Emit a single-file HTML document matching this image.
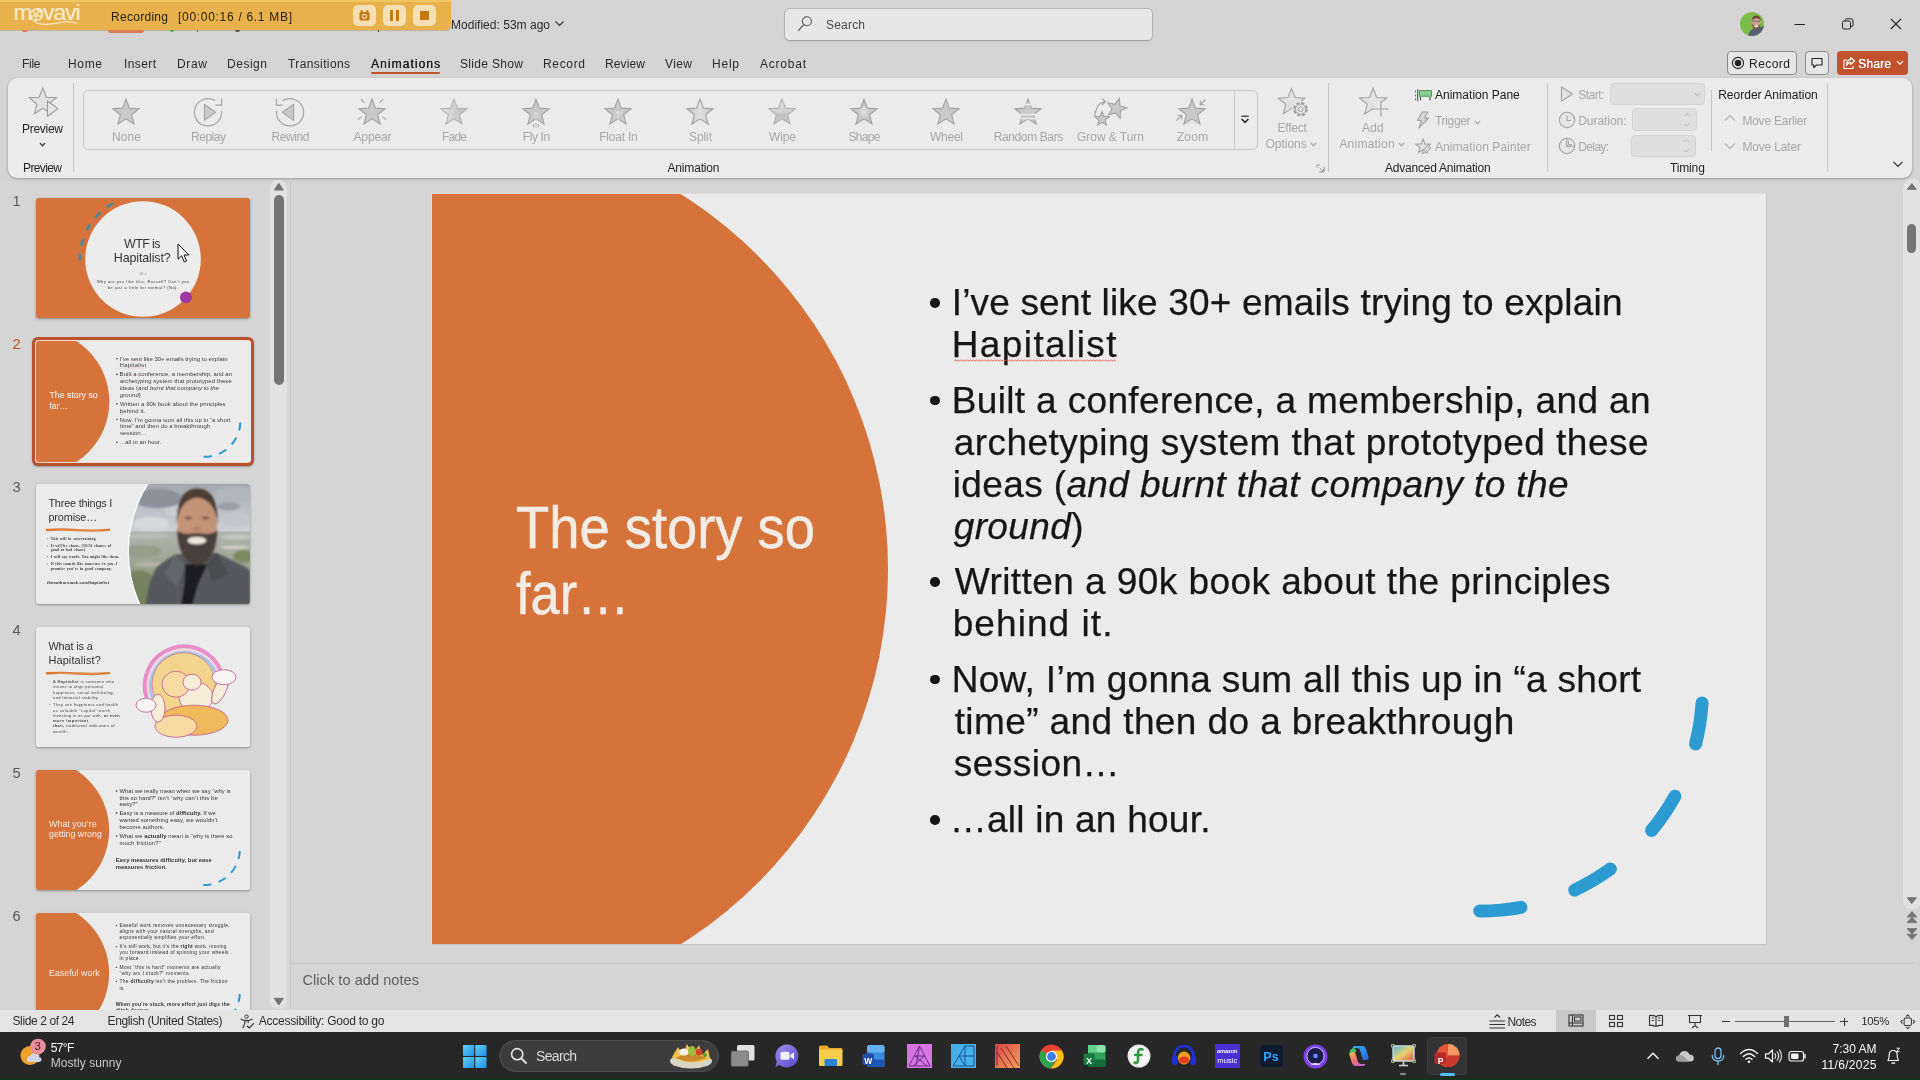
<!DOCTYPE html>
<html lang="en"><head><meta charset="utf-8"><title>PowerPoint</title>
<style>
html,body{margin:0;padding:0;}
body{width:1920px;height:1080px;overflow:hidden;background:#d4d4d4;position:relative;font-family:"Liberation Sans",sans-serif;}
#root{position:absolute;left:0;top:0;width:1920px;height:1080px;will-change:transform;}
.b{position:absolute;box-sizing:border-box;}
.t{position:absolute;white-space:nowrap;line-height:1;transform-origin:0 50%;}
svg{overflow:visible;}
</style></head>
<body>
<div id="root">
<!-- sec_chrome -->
<div class="b" style="left:0.00px;top:178.00px;width:1920.00px;height:832.00px;background:#d5d5d5;"></div>
<span class="t " style="left:451.00px;top:18.84px;font-size:12.00px;color:#2b2b2b;letter-spacing:0.017px;">Modified: 53m ago</span>
<svg class="b" style="left:554.00px;top:20.00px;" width="11" height="8" viewBox="0 0 11 8"><path d="M1.5 1.5 L5.5 5.5 L9.5 1.5" fill="none" stroke="#333" stroke-width="1.2"/></svg>
<div class="b" style="left:785.00px;top:9.00px;width:366.50px;height:31.00px;background:#e7e7e7;border-radius:4.5px;box-shadow:0 0 0 1px rgba(0,0,0,.13),0 1px 2px rgba(0,0,0,.16);"></div>
<svg class="b" style="left:797.00px;top:16.00px;" width="16" height="16" viewBox="0 0 16 16"><circle cx="9.9" cy="5.3" r="4.5" fill="none" stroke="#555" stroke-width="1.1"/><path d="M6.7 8.6 L1.2 14.8" stroke="#555" stroke-width="1.2" fill="none"/></svg>
<span class="t " style="left:826.00px;top:18.64px;font-size:12.00px;color:#4a4a4a;letter-spacing:0.195px;">Search</span>
<svg class="b" style="left:1740.00px;top:12.00px;" width="24" height="24" viewBox="0 0 24 24"><defs><clipPath id="avc"><circle cx="12" cy="12" r="12"/></clipPath></defs><g clip-path="url(#avc)"><rect width="24" height="24" fill="#7dbd46"/><path d="M8 24 Q10 16.5 15 16 L24 14 V24Z" fill="#566176"/><ellipse cx="16.2" cy="10.3" rx="4.6" ry="5.6" fill="#d2a285"/><path d="M11.6 9 Q12 3.5 16.5 3.6 Q21 3.8 20.8 9.5 Q19.5 6 16.2 6.2 Q13 6.2 11.6 9Z" fill="#6a4a3a"/><path d="M11.8 11.5 Q12.5 17.5 16.2 17.8 Q20 17.5 20.7 11.5 Q19.5 14 16.2 13.8 Q13 14 11.8 11.5Z" fill="#7a5a48"/><ellipse cx="16.2" cy="14.2" rx="2.2" ry="1" fill="#f3ece6"/><path d="M12.3 9.3 H20" stroke="#5b6b90" stroke-width="1.1"/></g></svg>
<svg class="b" style="left:1794.00px;top:18.00px;" width="12" height="12" viewBox="0 0 12 12"><path d="M0.5 6.5 H11" stroke="#222" stroke-width="1"/></svg>
<svg class="b" style="left:1842.00px;top:18.00px;" width="12" height="12" viewBox="0 0 12 12"><rect x="0.5" y="3" width="8" height="8" rx="1.5" fill="none" stroke="#222" stroke-width="1"/><path d="M3 3 V2.5 Q3 0.8 4.8 0.8 H9 Q11 0.8 11 2.8 V7 Q11 8.8 9 8.8" fill="none" stroke="#222" stroke-width="1"/></svg>
<svg class="b" style="left:1890.00px;top:18.00px;" width="12" height="12" viewBox="0 0 12 12"><path d="M0.8 0.8 L11 11 M11 0.8 L0.8 11" stroke="#222" stroke-width="1.1"/></svg>
<span class="t " style="left:22.00px;top:57.84px;font-size:12.00px;color:#2b2b2b;letter-spacing:-0.279px;">File</span>
<span class="t " style="left:68.00px;top:57.84px;font-size:12.00px;color:#2b2b2b;letter-spacing:0.663px;">Home</span>
<span class="t " style="left:124.00px;top:57.84px;font-size:12.00px;color:#2b2b2b;letter-spacing:0.398px;">Insert</span>
<span class="t " style="left:177.00px;top:57.84px;font-size:12.00px;color:#2b2b2b;letter-spacing:0.666px;">Draw</span>
<span class="t " style="left:227.00px;top:57.84px;font-size:12.00px;color:#2b2b2b;letter-spacing:0.529px;">Design</span>
<span class="t " style="left:288.00px;top:57.84px;font-size:12.00px;color:#2b2b2b;letter-spacing:0.376px;">Transitions</span>
<span class="t " style="left:371.00px;top:57.84px;font-size:12.00px;color:#1f1f1f;letter-spacing:1.071px;text-shadow:0.3px 0 0 #1f1f1f;">Animations</span>
<span class="t " style="left:460.00px;top:57.84px;font-size:12.00px;color:#2b2b2b;letter-spacing:0.329px;">Slide Show</span>
<span class="t " style="left:543.00px;top:57.84px;font-size:12.00px;color:#2b2b2b;letter-spacing:0.663px;">Record</span>
<span class="t " style="left:605.00px;top:57.84px;font-size:12.00px;color:#2b2b2b;letter-spacing:0.131px;">Review</span>
<span class="t " style="left:665.00px;top:57.84px;font-size:12.00px;color:#2b2b2b;letter-spacing:0.402px;">View</span>
<span class="t " style="left:712.00px;top:57.84px;font-size:12.00px;color:#2b2b2b;letter-spacing:0.773px;">Help</span>
<span class="t " style="left:760.00px;top:57.84px;font-size:12.00px;color:#2b2b2b;letter-spacing:0.774px;">Acrobat</span>
<div class="b" style="left:371.00px;top:72.00px;width:69.00px;height:2.00px;background:#c2522d;border-radius:1px;"></div>
<div class="b" style="left:1727.00px;top:51.00px;width:70.00px;height:24.00px;background:#e6e6e6;border:1px solid #8a8a8a;border-radius:4px;"></div>
<svg class="b" style="left:1731.00px;top:56.00px;" width="14" height="14" viewBox="0 0 14 14"><circle cx="7" cy="7" r="5.6" fill="none" stroke="#222" stroke-width="1.1"/><circle cx="7" cy="7" r="3.2" fill="#222"/></svg>
<span class="t " style="left:1749.00px;top:57.84px;font-size:12.00px;color:#1f1f1f;letter-spacing:0.463px;">Record</span>
<div class="b" style="left:1805.00px;top:51.00px;width:24.00px;height:24.00px;background:#e6e6e6;border:1px solid #8a8a8a;border-radius:4px;"></div>
<svg class="b" style="left:1811.00px;top:57.00px;" width="12" height="12" viewBox="0 0 12 12"><path d="M1 1.5 H11 V8 H5.5 L2.8 10.6 V8 H1Z" fill="none" stroke="#222" stroke-width="1.1" stroke-linejoin="round"/></svg>
<div class="b" style="left:1837.00px;top:51.00px;width:71.00px;height:24.00px;background:#c2522d;border-radius:4px;"></div>
<svg class="b" style="left:1842.00px;top:56.00px;" width="14" height="14" viewBox="0 0 14 14"><path d="M5 4 H2 V12.5 H11 V10" fill="none" stroke="#fff" stroke-width="1.1"/><path d="M8.5 1.5 L12.5 5 L8.5 8.5 V6.4 Q5.5 6.4 4.5 9.5 Q4.5 3.8 8.5 3.6Z" fill="none" stroke="#fff" stroke-width="1.1" stroke-linejoin="round"/></svg>
<span class="t " style="left:1858.00px;top:57.84px;font-size:12.00px;color:#fff;letter-spacing:0.244px;text-shadow:0.3px 0 0 #fff;">Share</span>
<svg class="b" style="left:1896.00px;top:60.00px;" width="8" height="6" viewBox="0 0 8 6"><path d="M1 1.2 L4 4.2 L7 1.2" fill="none" stroke="#fff" stroke-width="1.2"/></svg>
<div class="b" style="left:0.00px;top:0.00px;width:451.00px;height:30.00px;background:#e8b14c;border-top:2px solid #f1c563;border-radius:0 0 5px 0;box-shadow:0 1px 1px rgba(120,80,0,.25);"></div>
<div class="b" style="left:22.00px;top:30.00px;width:6.00px;height:1.50px;background:#e07b50;border-radius:0 0 3px 3px;"></div>
<div class="b" style="left:108.00px;top:30.00px;width:36.00px;height:2.50px;background:#e07b50;border-radius:0 0 4px 4px;"></div>
<div class="b" style="left:169.50px;top:30.00px;width:4.00px;height:1.60px;background:#3fb24a;border-radius:0 0 2px 2px;"></div>
<div class="b" style="left:196.50px;top:30.00px;width:1.00px;height:1.80px;background:#666;"></div>
<div class="b" style="left:234.50px;top:30.00px;width:5.00px;height:1.80px;background:#555;border-radius:0 0 3px 3px;"></div>
<div class="b" style="left:377.50px;top:30.00px;width:1.20px;height:2.20px;background:#444;"></div>
<span class="t " style="left:13.30px;top:2.15px;font-size:22.50px;color:#f8e7c4;letter-spacing:-0.854px;text-shadow:0.4px 0 0 #f8e7c4;">movavi</span>
<svg class="b" style="left:29.20px;top:8.20px;" width="14" height="14" viewBox="0 0 14 14"><circle cx="7" cy="7" r="6.3" fill="#f8e7c4"/><circle cx="7.00" cy="3.40" r="1.55" fill="#e8b14c"/><circle cx="10.42" cy="5.89" r="1.55" fill="#e8b14c"/><circle cx="9.12" cy="9.91" r="1.55" fill="#e8b14c"/><circle cx="4.88" cy="9.91" r="1.55" fill="#e8b14c"/><circle cx="3.58" cy="5.89" r="1.55" fill="#e8b14c"/><circle cx="7" cy="7" r="0.7" fill="#e8b14c"/></svg>
<svg class="b" style="left:33.00px;top:20.00px;" width="46" height="6" viewBox="0 0 46 6"><path d="M1 1.5 Q6 4.6 14 4.3 Q22 4 28 2.3 Q36 0.6 44 3.2" fill="none" stroke="#f8e7c4" stroke-width="1.2"/></svg>
<span class="t " style="left:111.00px;top:10.84px;font-size:12.00px;color:#2a2210;letter-spacing:0.288px;">Recording</span>
<span class="t " style="left:178.00px;top:10.84px;font-size:12.00px;color:#2a2210;letter-spacing:0.700px;">[00:00:16 / 6.1 MB]</span>
<div class="b" style="left:353.00px;top:5.00px;width:23.00px;height:21.00px;background:#f6dfb3;border-radius:5px;"></div>
<div class="b" style="left:383.00px;top:5.00px;width:23.00px;height:21.00px;background:#f6dfb3;border-radius:5px;"></div>
<div class="b" style="left:413.00px;top:5.00px;width:23.00px;height:21.00px;background:#f6dfb3;border-radius:5px;"></div>
<svg class="b" style="left:358.00px;top:9.00px;" width="13" height="13" viewBox="0 0 13 13"><rect x="1.5" y="3" width="10" height="8.5" rx="1.5" fill="#c8780e"/><rect x="2.5" y="1.2" width="2.2" height="2" fill="#c8780e"/><rect x="8.3" y="1.2" width="2.2" height="2" fill="#c8780e"/><circle cx="6.5" cy="7.3" r="2.6" fill="#f6dfb3"/><circle cx="6.5" cy="7.3" r="1.4" fill="#c8780e"/></svg>
<div class="b" style="left:390.00px;top:10.00px;width:3.00px;height:11.00px;background:#c8780e;"></div>
<div class="b" style="left:396.00px;top:10.00px;width:3.00px;height:11.00px;background:#c8780e;"></div>
<div class="b" style="left:420.00px;top:11.00px;width:9.00px;height:9.00px;background:#c8780e;"></div>
<!-- sec_ribbon -->
<div class="b" style="left:8.00px;top:78.00px;width:1904.00px;height:100.00px;background:#ebebeb;border-radius:9px;box-shadow:0 1px 3px rgba(0,0,0,.28),0 0 1px rgba(0,0,0,.18);"></div>
<div class="b" style="left:73.00px;top:83.00px;width:1.00px;height:89.00px;background:#c6c6c6;"></div>
<div class="b" style="left:1328.00px;top:83.00px;width:1.00px;height:89.00px;background:#c6c6c6;"></div>
<div class="b" style="left:1547.00px;top:83.00px;width:1.00px;height:89.00px;background:#c6c6c6;"></div>
<div class="b" style="left:1711.00px;top:89.50px;width:1.00px;height:61.00px;background:#c6c6c6;"></div>
<div class="b" style="left:1827.00px;top:83.00px;width:1.00px;height:89.00px;background:#c6c6c6;"></div>
<svg class="b" style="left:26.00px;top:84.00px;" width="36" height="36" viewBox="0 0 36 36"><polygon points="16.80,3.90 20.41,13.23 30.40,13.78 22.65,20.10 25.21,29.77 16.80,24.35 8.39,29.77 10.95,20.10 3.20,13.78 13.19,13.23" fill="#e2e2e2" stroke="#9b9b9b" stroke-width="1.1"/><path d="M21.5 17 L32 24.6 L21.5 32.2Z" fill="#e6e6e6" stroke="#9b9b9b" stroke-width="1.1" stroke-linejoin="round"/></svg>
<span class="t " style="left:22.00px;top:122.84px;font-size:12.00px;color:#262626;letter-spacing:-0.280px;">Preview</span>
<svg class="b" style="left:39.00px;top:141.50px;" width="7" height="4.8" viewBox="0 0 7 4.8"><path d="M1 1 L3.5 3.8 L6.0 1" fill="none" stroke="#333" stroke-width="1.2"/></svg>
<span class="t " style="left:23.00px;top:161.54px;font-size:12.00px;color:#262626;letter-spacing:-0.614px;">Preview</span>
<div class="b" style="left:83.00px;top:90.00px;width:1175.00px;height:60.00px;border:1px solid #c9c9c9;border-radius:5px;"></div>
<div class="b" style="left:1234.00px;top:90.00px;width:1.00px;height:60.00px;background:#c9c9c9;"></div>
<svg class="b" style="left:1239.00px;top:113.00px;" width="12" height="12" viewBox="0 0 12 12"><path d="M2.3 3.2 H9.7" stroke="#2a2a2a" stroke-width="1.2"/><path d="M2.6 6 L6 9.4 L9.4 6" fill="none" stroke="#2a2a2a" stroke-width="1.5"/></svg>
<svg class="b" style="left:0;top:0" width="1920" height="180" viewBox="0 0 1920 180"><polygon points="126.00,99.10 129.49,108.10 139.12,108.64 131.64,114.73 134.11,124.06 126.00,118.83 117.89,124.06 120.36,114.73 112.88,108.64 122.51,108.10" fill="#c9c9c9" stroke="#a3a3a3" stroke-width="1.1" stroke-linejoin="miter" /></svg>
<span class="t " style="left:112.00px;top:130.84px;font-size:12.00px;color:#a8a8a8;letter-spacing:0.104px;">None</span>
<svg class="b" style="left:0;top:0" width="1920" height="180" viewBox="0 0 1920 180"><path d="M215.2 100.8 A13.6 13.6 0 1 0 221.5 110.8" fill="none" stroke="#a3a3a3" stroke-width="1.2"/><path d="M221.6 98.8 V105.2 H215.4" fill="none" stroke="#a3a3a3" stroke-width="1.2"/><path d="M204.4 104.2 L215.6 112.3 L204.4 120.4Z" fill="#c9c9c9" stroke="#a3a3a3" stroke-width="1.1" stroke-linejoin="round"/></svg>
<span class="t " style="left:191.00px;top:130.84px;font-size:12.00px;color:#a8a8a8;letter-spacing:-0.471px;">Replay</span>
<svg class="b" style="left:0;top:0" width="1920" height="180" viewBox="0 0 1920 180"><path d="M282.8 100.8 A13.6 13.6 0 1 1 276.5 110.8" fill="none" stroke="#a3a3a3" stroke-width="1.2"/><path d="M276.4 98.8 V105.2 H282.6" fill="none" stroke="#a3a3a3" stroke-width="1.2"/><path d="M293.6 104.2 L282.4 112.3 L293.6 120.4Z" fill="#c9c9c9" stroke="#a3a3a3" stroke-width="1.1" stroke-linejoin="round"/></svg>
<span class="t " style="left:271.50px;top:130.84px;font-size:12.00px;color:#a8a8a8;letter-spacing:-0.404px;">Rewind</span>
<svg class="b" style="left:0;top:0" width="1920" height="180" viewBox="0 0 1920 180"><polygon points="372.00,99.10 375.49,108.10 385.12,108.64 377.64,114.73 380.11,124.06 372.00,118.83 363.89,124.06 366.36,114.73 358.88,108.64 368.51,108.10" fill="#c9c9c9" stroke="#a3a3a3" stroke-width="1.1" stroke-linejoin="miter" /><path d="M361.2 99.3 L364.4 102.9" stroke="#a3a3a3" stroke-width="1.1"/><path d="M382.8 99.3 L379.6 102.9" stroke="#a3a3a3" stroke-width="1.1"/><path d="M358.0 119.5 L361.4 116.7" stroke="#a3a3a3" stroke-width="1.1"/><path d="M386.0 119.5 L382.6 116.7" stroke="#a3a3a3" stroke-width="1.1"/></svg>
<span class="t " style="left:353.50px;top:130.84px;font-size:12.00px;color:#a8a8a8;letter-spacing:-0.139px;">Appear</span>
<svg class="b" style="left:0;top:0" width="1920" height="180" viewBox="0 0 1920 180"><defs><linearGradient id="gfade" x1="0" x2="1"><stop offset="0" stop-color="#e2e2e2"/><stop offset="1" stop-color="#bdbdbd"/></linearGradient></defs><polygon points="454.00,99.10 457.49,108.10 467.12,108.64 459.64,114.73 462.11,124.06 454.00,118.83 445.89,124.06 448.36,114.73 440.88,108.64 450.51,108.10" fill="url(#gfade)" stroke="#b4b4b4" stroke-width="1.1" stroke-linejoin="miter" /></svg>
<span class="t " style="left:442.00px;top:130.84px;font-size:12.00px;color:#a8a8a8;letter-spacing:-0.784px;">Fade</span>
<svg class="b" style="left:0;top:0" width="1920" height="180" viewBox="0 0 1920 180"><polygon points="536.00,99.10 539.49,108.10 549.12,108.64 541.64,114.73 544.11,124.06 536.00,118.83 527.89,124.06 530.36,114.73 522.88,108.64 532.51,108.10" fill="#c9c9c9" stroke="#a3a3a3" stroke-width="1.1" stroke-linejoin="miter" /><path d="M536.0 112 V121 M533.5 114.5 L536.0 112 L538.5 114.5" stroke="#e4e4e4" stroke-width="0.9" fill="none"/><path d="M533.5 124 V127.5 M536.0 123 V127.5 M538.5 124 V127.5" stroke="#a3a3a3" stroke-width="0.9"/></svg>
<span class="t " style="left:522.75px;top:130.84px;font-size:12.00px;color:#a8a8a8;letter-spacing:-0.368px;">Fly In</span>
<svg class="b" style="left:0;top:0" width="1920" height="180" viewBox="0 0 1920 180"><polygon points="618.00,99.10 621.49,108.10 631.12,108.64 623.64,114.73 626.11,124.06 618.00,118.83 609.89,124.06 612.36,114.73 604.88,108.64 614.51,108.10" fill="#c9c9c9" stroke="#a3a3a3" stroke-width="1.1" stroke-linejoin="miter" /><path d="M618.0 111 V120 M615.0 114 L618.0 111 L621.0 114" stroke="#e4e4e4" stroke-width="0.9" fill="none"/></svg>
<span class="t " style="left:599.25px;top:130.84px;font-size:12.00px;color:#a8a8a8;letter-spacing:-0.217px;">Float In</span>
<svg class="b" style="left:0;top:0" width="1920" height="180" viewBox="0 0 1920 180"><defs><linearGradient id="gsplit" x1="0" x2="1"><stop offset="0" stop-color="#c4c4c4"/><stop offset="0.5" stop-color="#e0e0e0"/><stop offset="1" stop-color="#c4c4c4"/></linearGradient></defs><polygon points="700.00,99.10 703.49,108.10 713.12,108.64 705.64,114.73 708.11,124.06 700.00,118.83 691.89,124.06 694.36,114.73 686.88,108.64 696.51,108.10" fill="url(#gsplit)" stroke="#a3a3a3" stroke-width="1.1" stroke-linejoin="miter" /></svg>
<span class="t " style="left:689.00px;top:130.84px;font-size:12.00px;color:#a8a8a8;letter-spacing:-0.086px;">Split</span>
<svg class="b" style="left:0;top:0" width="1920" height="180" viewBox="0 0 1920 180"><defs><linearGradient id="gwipe" x1="0" x2="0" y1="0" y2="1"><stop offset="0" stop-color="#e2e2e2"/><stop offset="0.55" stop-color="#d0d0d0"/><stop offset="0.6" stop-color="#c2c2c2"/><stop offset="1" stop-color="#c6c6c6"/></linearGradient></defs><polygon points="782.00,99.10 785.49,108.10 795.12,108.64 787.64,114.73 790.11,124.06 782.00,118.83 773.89,124.06 776.36,114.73 768.88,108.64 778.51,108.10" fill="url(#gwipe)" stroke="#b0b0b0" stroke-width="1.1" stroke-linejoin="miter" /></svg>
<span class="t " style="left:769.00px;top:130.84px;font-size:12.00px;color:#a8a8a8;letter-spacing:-0.113px;">Wipe</span>
<svg class="b" style="left:0;top:0" width="1920" height="180" viewBox="0 0 1920 180"><defs><radialGradient id="gshape"><stop offset="0" stop-color="#e6e6e6"/><stop offset="0.5" stop-color="#c6c6c6"/></radialGradient></defs><polygon points="864.00,99.10 867.49,108.10 877.12,108.64 869.64,114.73 872.11,124.06 864.00,118.83 855.89,124.06 858.36,114.73 850.88,108.64 860.51,108.10" fill="url(#gshape)" stroke="#a3a3a3" stroke-width="1.1" stroke-linejoin="miter" /></svg>
<span class="t " style="left:848.50px;top:130.84px;font-size:12.00px;color:#a8a8a8;letter-spacing:-0.675px;">Shape</span>
<svg class="b" style="left:0;top:0" width="1920" height="180" viewBox="0 0 1920 180"><polygon points="946.00,99.10 949.49,108.10 959.12,108.64 951.64,114.73 954.11,124.06 946.00,118.83 937.89,124.06 940.36,114.73 932.88,108.64 942.51,108.10" fill="#c9c9c9" stroke="#a3a3a3" stroke-width="1.1" stroke-linejoin="miter" /></svg>
<span class="t " style="left:930.00px;top:130.84px;font-size:12.00px;color:#a8a8a8;letter-spacing:-0.254px;">Wheel</span>
<svg class="b" style="left:0;top:0" width="1920" height="180" viewBox="0 0 1920 180"><polygon points="1028.00,99.10 1031.49,108.10 1041.12,108.64 1033.64,114.73 1036.11,124.06 1028.00,118.83 1019.89,124.06 1022.36,114.73 1014.88,108.64 1024.51,108.10" fill="#c9c9c9" stroke="#a3a3a3" stroke-width="1.1" stroke-linejoin="miter" /><path d="M1016.0 104.5 H1040.0" stroke="#eaeaea" stroke-width="1.6"/><path d="M1016.0 114.5 H1040.0" stroke="#eaeaea" stroke-width="1.6"/><path d="M1016.0 118.5 H1040.0" stroke="#eaeaea" stroke-width="1.6"/></svg>
<span class="t " style="left:993.70px;top:130.84px;font-size:12.00px;color:#a8a8a8;letter-spacing:-0.377px;">Random Bars</span>
<svg class="b" style="left:0;top:0" width="1920" height="180" viewBox="0 0 1920 180"><polygon points="1119.22,98.36 1120.01,105.66 1126.99,107.95 1120.29,110.96 1120.26,118.30 1115.33,112.86 1108.34,115.11 1111.99,108.74 1107.69,102.78 1114.88,104.28" fill="#c9c9c9" stroke="#a3a3a3" stroke-width="1.1"/><polygon points="1102.00,111.50 1103.90,116.39 1109.13,116.68 1105.07,120.00 1106.41,125.07 1102.00,122.22 1097.59,125.07 1098.93,120.00 1094.87,116.68 1100.10,116.39" fill="#c9c9c9" stroke="#a3a3a3" stroke-width="1.1"/><path d="M1095.5 112.5 Q1097.0 103 1105.0 101.5 M1102.0 98.5 L1105.5 101.5 L1102.0 105" fill="none" stroke="#a3a3a3" stroke-width="1.1"/><path d="M1095.0 116 Q1094.5 114 1095.5 111" fill="none" stroke="#a3a3a3" stroke-width="1.1"/></svg>
<span class="t " style="left:1077.00px;top:130.84px;font-size:12.00px;color:#a8a8a8;letter-spacing:-0.036px;">Grow &amp; Turn</span>
<svg class="b" style="left:0;top:0" width="1920" height="180" viewBox="0 0 1920 180"><polygon points="1192.00,99.10 1195.49,108.10 1205.12,108.64 1197.64,114.73 1200.11,124.06 1192.00,118.83 1183.89,124.06 1186.36,114.73 1178.88,108.64 1188.51,108.10" fill="#c9c9c9" stroke="#a3a3a3" stroke-width="1.1" stroke-linejoin="miter" /><path d="M1205.5 99.5 L1200.5 104.5 M1200.3 100.5 V104.8 H1204.6" fill="none" stroke="#a3a3a3" stroke-width="1.1"/><path d="M1176.5 120.5 L1181.5 115.5 M1177.4 115.3 H1181.7 V119.5" fill="none" stroke="#a3a3a3" stroke-width="1.1"/></svg>
<span class="t " style="left:1176.80px;top:130.84px;font-size:12.00px;color:#a8a8a8;letter-spacing:0.242px;">Zoom</span>
<span class="t " style="left:667.50px;top:161.54px;font-size:12.00px;color:#262626;letter-spacing:-0.170px;">Animation</span>
<svg class="b" style="left:1316.00px;top:164.00px;" width="9" height="9" viewBox="0 0 9 9"><path d="M1 4 V1 H4 M8 3 V8 H3 M3.5 3.5 L7.5 7.5 M7.5 4.5 V7.5 H4.5" fill="none" stroke="#a0a0a0" stroke-width="1"/></svg>
<svg class="b" style="left:1274.00px;top:84.00px;" width="40" height="40" viewBox="0 0 40 40"><polygon points="17.50,4.50 21.01,13.56 30.72,14.10 23.18,20.25 25.67,29.65 17.50,24.38 9.33,29.65 11.82,20.25 4.28,14.10 13.99,13.56" fill="#e2e2e2" stroke="#a3a3a3" stroke-width="1.1"/><circle cx="26.5" cy="25.2" r="8.3" fill="#eaeaea"/><circle cx="26.5" cy="25.2" r="6" fill="none" stroke="#a3a3a3" stroke-width="2.8" stroke-dasharray="3.1 1.6"/><circle cx="26.5" cy="25.2" r="5.1" fill="#e6e6e6" stroke="#a3a3a3" stroke-width="1"/><circle cx="26.5" cy="25.2" r="2.4" fill="#eaeaea" stroke="#a3a3a3" stroke-width="1"/></svg>
<span class="t " style="left:1277.50px;top:121.64px;font-size:12.00px;color:#a8a8a8;letter-spacing:-0.233px;">Effect</span>
<span class="t " style="left:1265.50px;top:138.04px;font-size:12.00px;color:#a8a8a8;letter-spacing:-0.026px;">Options</span>
<svg class="b" style="left:1309.50px;top:142.00px;" width="7" height="4.8" viewBox="0 0 7 4.8"><path d="M1 1 L3.5 3.8 L6.0 1" fill="none" stroke="#a8a8a8" stroke-width="1.2"/></svg>
<svg class="b" style="left:1356.00px;top:84.00px;" width="40" height="40" viewBox="0 0 40 40"><polygon points="17.10,4.10 20.71,13.43 30.70,13.98 22.95,20.30 25.51,29.97 17.10,24.55 8.69,29.97 11.25,20.30 3.50,13.98 13.49,13.43" fill="#e2e2e2" stroke="#a3a3a3" stroke-width="1.1"/><rect x="18" y="18.5" width="15" height="14.5" fill="#eaeaea"/><path d="M24.9 17.4 V32.6 M17.3 25 H32.5" stroke="#a3a3a3" stroke-width="1.2"/></svg>
<span class="t " style="left:1362.00px;top:121.64px;font-size:12.00px;color:#a8a8a8;letter-spacing:0.174px;">Add</span>
<span class="t " style="left:1339.40px;top:138.04px;font-size:12.00px;color:#a8a8a8;letter-spacing:0.230px;">Animation</span>
<svg class="b" style="left:1398.00px;top:142.00px;" width="7" height="4.8" viewBox="0 0 7 4.8"><path d="M1 1 L3.5 3.8 L6.0 1" fill="none" stroke="#a8a8a8" stroke-width="1.2"/></svg>
<svg class="b" style="left:1414.00px;top:89.00px;" width="18" height="13" viewBox="0 0 18 13"><rect x="5.6" y="1.6" width="11.8" height="5.6" fill="#8ccf95" stroke="#3f8f4c" stroke-width="0.9"/><path d="M3.7 0.3 V12.2 M6.5 8 V11.3 M16 8 V11.3" stroke="#3a3a3a" stroke-width="1"/><path d="M1.5 1.5 V3.5 M1.5 5.5 V7.5 M1.5 9.5 V11.3" stroke="#3f8f4c" stroke-width="1"/></svg>
<span class="t " style="left:1435.00px;top:88.94px;font-size:12.00px;color:#202020;letter-spacing:0.006px;">Animation Pane</span>
<svg class="b" style="left:1415.00px;top:111.00px;" width="16" height="18" viewBox="0 0 16 18"><path d="M7 1 H13 L9.5 7 H13.5 L4 17 L6.5 9.5 H2.5Z" fill="#d6d6d6" stroke="#a3a3a3" stroke-width="1.1" stroke-linejoin="round"/></svg>
<span class="t " style="left:1435.00px;top:115.14px;font-size:12.00px;color:#a8a8a8;letter-spacing:-0.328px;">Trigger</span>
<svg class="b" style="left:1474.00px;top:119.50px;" width="7" height="4.8" viewBox="0 0 7 4.8"><path d="M1 1 L3.5 3.8 L6.0 1" fill="none" stroke="#a8a8a8" stroke-width="1.2"/></svg>
<svg class="b" style="left:1415.00px;top:138.00px;" width="18" height="17" viewBox="0 0 18 17"><polygon points="8.00,1.00 9.90,5.89 15.13,6.18 11.07,9.50 12.41,14.57 8.00,11.72 3.59,14.57 4.93,9.50 0.87,6.18 6.10,5.89" fill="#e2e2e2" stroke="#a3a3a3" stroke-width="1.1"/><path d="M8.5 11.5 L13 7 L16 10 L11.5 14.5Z M8.5 11.5 L7 15.5 L11.5 14.5" fill="#d6d6d6" stroke="#a3a3a3" stroke-width="1" stroke-linejoin="round"/></svg>
<span class="t " style="left:1435.00px;top:140.84px;font-size:12.00px;color:#a8a8a8;letter-spacing:0.067px;">Animation Painter</span>
<span class="t " style="left:1385.00px;top:161.54px;font-size:12.00px;color:#262626;letter-spacing:-0.218px;">Advanced Animation</span>
<svg class="b" style="left:1559.00px;top:85.00px;" width="16" height="18" viewBox="0 0 16 18"><path d="M2.5 2 L13.5 9 L2.5 16Z" fill="#e2e2e2" stroke="#a3a3a3" stroke-width="1.1" stroke-linejoin="round"/></svg>
<span class="t " style="left:1578.20px;top:88.84px;font-size:12.00px;color:#a8a8a8;letter-spacing:-0.495px;">Start:</span>
<div class="b" style="left:1610.30px;top:82.60px;width:94.50px;height:22.70px;background:#dfdfdf;border:1px solid #d3d3d3;border-radius:4px;"></div>
<svg class="b" style="left:1694.00px;top:92.00px;" width="7" height="4.8" viewBox="0 0 7 4.8"><path d="M1 1 L3.5 3.8 L6.0 1" fill="none" stroke="#b0b0b0" stroke-width="1"/></svg>
<svg class="b" style="left:1558.00px;top:111.00px;" width="18" height="18" viewBox="0 0 18 18"><circle cx="9" cy="9" r="7.7" fill="#e6e6e6" stroke="#a3a3a3" stroke-width="1.1"/><path d="M9 4.5 V9.5 H12.5" fill="none" stroke="#a3a3a3" stroke-width="1.1"/></svg>
<span class="t " style="left:1578.20px;top:114.94px;font-size:12.00px;color:#a8a8a8;letter-spacing:-0.049px;">Duration:</span>
<div class="b" style="left:1632.00px;top:108.30px;width:64.80px;height:23.20px;background:#dfdfdf;border:1px solid #d3d3d3;border-radius:4px;"></div>
<svg class="b" style="left:1682.00px;top:111.00px;" width="10" height="18" viewBox="0 0 10 18"><path d="M2.5 5 L5 2.5 L7.5 5 M2.5 12.5 L5 15 L7.5 12.5" fill="none" stroke="#b8b8b8" stroke-width="1"/></svg>
<svg class="b" style="left:1558.00px;top:137.00px;" width="18" height="18" viewBox="0 0 18 18"><circle cx="9" cy="9" r="7.7" fill="#e6e6e6" stroke="#a3a3a3" stroke-width="1.1"/><path d="M9 1.5 V9 H16.5" fill="none" stroke="#a3a3a3" stroke-width="1"/><path d="M9 4.5 V9.5 H12.5" fill="none" stroke="#a3a3a3" stroke-width="1.1"/><path d="M9 1.3 A7.7 7.7 0 0 1 16.7 9 L9 9Z" fill="#eaeaea" stroke="#a3a3a3" stroke-width="0.8"/><path d="M10.5 3.5 V7.5 H14" fill="none" stroke="#a3a3a3" stroke-width="1"/></svg>
<span class="t " style="left:1578.20px;top:140.84px;font-size:12.00px;color:#a8a8a8;letter-spacing:-0.603px;">Delay:</span>
<div class="b" style="left:1631.00px;top:134.50px;width:64.80px;height:22.70px;background:#dfdfdf;border:1px solid #d3d3d3;border-radius:4px;"></div>
<svg class="b" style="left:1681.00px;top:137.00px;" width="10" height="18" viewBox="0 0 10 18"><path d="M2.5 5 L5 2.5 L7.5 5 M2.5 12.5 L5 15 L7.5 12.5" fill="none" stroke="#b8b8b8" stroke-width="1"/></svg>
<span class="t " style="left:1718.20px;top:88.84px;font-size:12.00px;color:#202020;letter-spacing:0.013px;">Reorder Animation</span>
<svg class="b" style="left:1724.00px;top:114.00px;" width="12" height="8" viewBox="0 0 12 8"><path d="M1 6.5 L6 1.5 L11 6.5" fill="none" stroke="#b0b0b0" stroke-width="1.1"/></svg>
<span class="t " style="left:1742.40px;top:114.94px;font-size:12.00px;color:#a8a8a8;letter-spacing:-0.223px;">Move Earlier</span>
<svg class="b" style="left:1724.00px;top:142.00px;" width="12" height="8" viewBox="0 0 12 8"><path d="M1 1.5 L6 6.5 L11 1.5" fill="none" stroke="#b0b0b0" stroke-width="1.1"/></svg>
<span class="t " style="left:1742.40px;top:140.84px;font-size:12.00px;color:#a8a8a8;letter-spacing:-0.159px;">Move Later</span>
<span class="t " style="left:1670.00px;top:161.54px;font-size:12.00px;color:#262626;letter-spacing:-0.152px;">Timing</span>
<svg class="b" style="left:1892.00px;top:160.00px;" width="12" height="9" viewBox="0 0 12 9"><path d="M1.5 1.8 L6 6.5 L10.5 1.8" fill="none" stroke="#2a2a2a" stroke-width="1.2"/></svg>
<!-- sec_thumbs -->
<div class="b" style="left:270.00px;top:180.00px;width:17.00px;height:829.00px;background:#e2e2e2;border-radius:8px;"></div>
<div class="b" style="left:289.50px;top:178.00px;width:1.00px;height:831.00px;background:#c6c6c6;"></div>
<div class="b" style="left:274.00px;top:195.00px;width:9.50px;height:190.00px;background:#747474;border-radius:5px;"></div>
<svg class="b" style="left:273.00px;top:182.00px;" width="12" height="9" viewBox="0 0 12 9"><path d="M1.3 8 L5.8 1.3 L10.3 8Z" fill="#747474" stroke="#747474" stroke-width="1" stroke-linejoin="round"/></svg>
<svg class="b" style="left:273.00px;top:997.00px;" width="12" height="9" viewBox="0 0 12 9"><path d="M1.3 1.3 L5.8 8 L10.3 1.3Z" fill="#747474" stroke="#747474" stroke-width="1" stroke-linejoin="round"/></svg>
<div class="b" style="left:36.00px;top:197.80px;width:214.00px;height:120.40px;background:#ebebeb;overflow:hidden;border-radius:2.5px;box-shadow:0 1px 2.5px rgba(0,0,0,.35);"><div class="b" style="left:0;top:0;width:1334px;height:750.5px;transform:scale(0.16042);transform-origin:0 0;"><svg class="b" style="left:0;top:0" width="1334" height="750.5" viewBox="0 0 1334 750.5"><rect width="1334" height="750.5" fill="#d6733b"/><path d="M273.2 390.6 A394.0 394.0 0 0 1 274.5 346.6" fill="none" stroke="#4a8a9e" stroke-width="17"/><path d="M281.9 297.0 A394.0 394.0 0 0 1 293.6 254.6" fill="none" stroke="#4a8a9e" stroke-width="17"/><path d="M315.4 202.6 A394.0 394.0 0 0 1 337.3 164.5" fill="none" stroke="#4a8a9e" stroke-width="17"/><path d="M369.7 121.8 A394.0 394.0 0 0 1 400.3 90.3" fill="none" stroke="#4a8a9e" stroke-width="17"/><path d="M442.7 56.4 A394.0 394.0 0 0 1 480.2 33.4" fill="none" stroke="#4a8a9e" stroke-width="17"/><circle cx="667.0" cy="380.3" r="360.3" fill="#ececec"/><circle cx="934.4" cy="619.6" r="37" fill="#a2369f"/></svg>
<span class="t " style="left:548.68px;top:243.79px;font-size:78.00px;color:#333;letter-spacing:-3.877px;">WTF is</span>
<span class="t " style="left:484.72px;top:333.55px;font-size:78.00px;color:#333;letter-spacing:-0.887px;">Hapitalist?</span>
<span class="t " style="left:650.17px;top:460.12px;font-size:22.00px;color:#444;letter-spacing:11.093px;">Or</span>
<span class="t " style="left:379.63px;top:509.54px;font-size:24.00px;color:#333;letter-spacing:3.482px;">Why are you like this, Russell? Can’t you</span>
<span class="t " style="left:447.58px;top:546.32px;font-size:24.00px;color:#333;letter-spacing:3.398px;">be just a little bit normal? (No).</span></div></div>
<div class="b" style="left:32.30px;top:336.70px;width:221.70px;height:129.00px;background:#b9512e;border-radius:6px;box-shadow:0 1px 2px rgba(0,0,0,.3);"></div>
<div class="b" style="left:35.00px;top:339.60px;width:216.40px;height:123.40px;background:#f4dccb;border-radius:3.5px;"></div>
<div class="b" style="left:36.00px;top:340.80px;width:214.60px;height:121.20px;background:#ebebeb;overflow:hidden;border-radius:3px;"><div class="b" style="left:0;top:0;width:1334px;height:750.5px;transform:scale(0.16087,0.16149);transform-origin:0 0;"><svg class="b" style="left:0;top:0" width="1334" height="750.5" viewBox="0 0 1334 750.5"><circle cx="13.0" cy="375.2" r="443" fill="#d6733b"/><path d="M1270.06 508.94 A222.00 222.00 0 0 1 1263.62 549.83" fill="none" stroke="#2b9bd1" stroke-width="13" stroke-linecap="round"/><path d="M1242.85 602.29 A222.00 222.00 0 0 1 1219.55 636.51" fill="none" stroke="#2b9bd1" stroke-width="13" stroke-linecap="round"/><path d="M1178.36 675.06 A222.00 222.00 0 0 1 1142.67 696.04" fill="none" stroke="#2b9bd1" stroke-width="13" stroke-linecap="round"/><path d="M1088.96 713.28 A222.00 222.00 0 0 1 1047.73 717.00" fill="none" stroke="#2b9bd1" stroke-width="13" stroke-linecap="round"/></svg>
<span class="t " style="left:83.70px;top:304.50px;font-size:59.30px;color:#f3ece5;transform:scaleX(0.9164);-webkit-text-stroke:0.55px #f3ece5;">The story so</span>
<span class="t " style="left:83.70px;top:370.50px;font-size:59.30px;color:#f3ece5;transform:scaleX(0.8832);-webkit-text-stroke:0.55px #f3ece5;">far…</span>
<span class="t " style="left:519.70px;top:90.98px;font-size:37.00px;color:#3c3c3c;letter-spacing:0.179px;">I’ve sent like 30+ emails trying to explain</span>
<div class="b" style="left:498.00px;top:104.70px;width:9.60px;height:9.60px;background:#3c3c3c;border-radius:50%;"></div>
<span class="t " style="left:519.70px;top:132.98px;font-size:37.00px;color:#3c3c3c;letter-spacing:1.403px;">Hapitalist</span>
<span class="t " style="left:519.70px;top:188.48px;font-size:37.00px;color:#3c3c3c;letter-spacing:0.356px;">Built a conference, a membership, and an</span>
<div class="b" style="left:498.00px;top:202.20px;width:9.60px;height:9.60px;background:#3c3c3c;border-radius:50%;"></div>
<span class="t " style="left:521.70px;top:230.48px;font-size:37.00px;color:#3c3c3c;letter-spacing:0.465px;">archetyping system that prototyped these</span>
<span class="t " style="left:520.70px;top:272.48px;font-size:37.00px;color:#3c3c3c;letter-spacing:0.375px;">ideas (<i>and burnt that company to the</i></span>
<span class="t " style="left:521.70px;top:314.48px;font-size:37.00px;color:#3c3c3c;letter-spacing:0.377px;"><i>ground</i>)</span>
<span class="t " style="left:522.70px;top:369.98px;font-size:37.00px;color:#3c3c3c;letter-spacing:0.443px;">Written a 90k book about the principles</span>
<div class="b" style="left:498.00px;top:383.70px;width:9.60px;height:9.60px;background:#3c3c3c;border-radius:50%;"></div>
<span class="t " style="left:520.70px;top:411.98px;font-size:37.00px;color:#3c3c3c;letter-spacing:1.070px;">behind it.</span>
<span class="t " style="left:519.70px;top:467.68px;font-size:37.00px;color:#3c3c3c;letter-spacing:0.312px;">Now, I’m gonna sum all this up in “a short</span>
<div class="b" style="left:498.00px;top:481.40px;width:9.60px;height:9.60px;background:#3c3c3c;border-radius:50%;"></div>
<span class="t " style="left:522.70px;top:509.68px;font-size:37.00px;color:#3c3c3c;letter-spacing:0.401px;">time” and then do a breakthrough</span>
<span class="t " style="left:521.70px;top:551.68px;font-size:37.00px;color:#3c3c3c;letter-spacing:0.478px;">session…</span>
<span class="t " style="left:517.70px;top:607.98px;font-size:37.00px;color:#3c3c3c;letter-spacing:0.246px;">…all in an hour.</span>
<div class="b" style="left:498.00px;top:621.70px;width:9.60px;height:9.60px;background:#3c3c3c;border-radius:50%;"></div>
<svg class="b" style="left:522.00px;top:166.70px;" width="164" height="3" viewBox="0 0 164 3"><path d="M0 1.2 l1.5 -1.2 l1.5 1.2 l1.5 -1.2 l1.5 1.2 l1.5 -1.2 l1.5 1.2 l1.5 -1.2 l1.5 1.2 l1.5 -1.2 l1.5 1.2 l1.5 -1.2 l1.5 1.2 l1.5 -1.2 l1.5 1.2 l1.5 -1.2 l1.5 1.2 l1.5 -1.2 l1.5 1.2 l1.5 -1.2 l1.5 1.2 l1.5 -1.2 l1.5 1.2 l1.5 -1.2 l1.5 1.2 l1.5 -1.2 l1.5 1.2 l1.5 -1.2 l1.5 1.2 l1.5 -1.2 l1.5 1.2 l1.5 -1.2 l1.5 1.2 l1.5 -1.2 l1.5 1.2 l1.5 -1.2 l1.5 1.2 l1.5 -1.2 l1.5 1.2 l1.5 -1.2 l1.5 1.2 l1.5 -1.2 l1.5 1.2 l1.5 -1.2 l1.5 1.2 l1.5 -1.2 l1.5 1.2 l1.5 -1.2 l1.5 1.2 l1.5 -1.2 l1.5 1.2 l1.5 -1.2 l1.5 1.2 l1.5 -1.2 l1.5 1.2 l1.5 -1.2 l1.5 1.2 l1.5 -1.2 l1.5 1.2 l1.5 -1.2 l1.5 1.2 l1.5 -1.2 l1.5 1.2 l1.5 -1.2 l1.5 1.2 l1.5 -1.2 l1.5 1.2 l1.5 -1.2 l1.5 1.2 l1.5 -1.2 l1.5 1.2 l1.5 -1.2 l1.5 1.2 l1.5 -1.2 l1.5 1.2 l1.5 -1.2 l1.5 1.2 l1.5 -1.2 l1.5 1.2 l1.5 -1.2 l1.5 1.2 l1.5 -1.2 l1.5 1.2 l1.5 -1.2 l1.5 1.2 l1.5 -1.2 l1.5 1.2 l1.5 -1.2 l1.5 1.2 l1.5 -1.2 l1.5 1.2 l1.5 -1.2 l1.5 1.2 l1.5 -1.2 l1.5 1.2 l1.5 -1.2 l1.5 1.2 l1.5 -1.2 l1.5 1.2 l1.5 -1.2 l1.5 1.2 l1.5 -1.2 l1.5 1.2 l1.5 -1.2 l1.5 1.2 l1.5 -1.2 l1.5 1.2 l1.5 -1.2 l1.5 1.2" fill="none" stroke="#e2564f" stroke-width="0.9"/></svg></div></div>
<div class="b" style="left:36.00px;top:483.80px;width:214.00px;height:120.40px;background:#ebebeb;overflow:hidden;border-radius:2.5px;box-shadow:0 1px 2.5px rgba(0,0,0,.35);"><div class="b" style="left:0;top:0;width:1334px;height:750.5px;transform:scale(0.16042);transform-origin:0 0;"><svg class="b" style="left:0;top:0" width="1334" height="750.5" viewBox="0 0 1334 750.5"><defs><clipPath id="ph3"><circle cx="1365.2" cy="420.1" r="785.4"/></clipPath><linearGradient id="sky3" x1="0" x2="0" y1="0" y2="1"><stop offset="0" stop-color="#a2a6ad"/><stop offset="0.2" stop-color="#bbbec4"/><stop offset="0.385" stop-color="#cdd0d3"/><stop offset="0.4" stop-color="#aeb3ae"/><stop offset="0.6" stop-color="#a2a898"/><stop offset="1" stop-color="#7d8768"/></linearGradient><filter id="bl3" x="-10%" y="-10%" width="120%" height="120%"><feGaussianBlur stdDeviation="5"/></filter></defs><circle cx="1356.2" cy="420.1" r="785.4" fill="#fbfbfb"/><g clip-path="url(#ph3)"><rect x="500" y="0" width="834" height="750.5" fill="url(#sky3)"/><g filter="url(#bl3)"><ellipse cx="760" cy="90" rx="150" ry="60" fill="#8c9098"/><ellipse cx="1240" cy="60" rx="120" ry="45" fill="#b2b6bd"/><ellipse cx="720" cy="250" rx="110" ry="45" fill="#d6d8db"/><ellipse cx="1250" cy="220" rx="90" ry="50" fill="#c3c6cb"/><ellipse cx="860" cy="170" rx="60" ry="30" fill="#c9ccd1"/><ellipse cx="1200" cy="140" rx="70" ry="25" fill="#999da5"/><ellipse cx="690" cy="325" rx="140" ry="18" fill="#b9bcb8"/><ellipse cx="1250" cy="330" rx="100" ry="18" fill="#c2c4be"/><ellipse cx="660" cy="420" rx="120" ry="40" fill="#969e88"/><ellipse cx="640" cy="660" rx="120" ry="120" fill="#77825e"/><ellipse cx="1290" cy="450" rx="60" ry="40" fill="#7c8a62"/><ellipse cx="1240" cy="395" rx="90" ry="12" fill="#cfcdc4"/><ellipse cx="700" cy="500" rx="90" ry="16" fill="#b5b6a6"/><path d="M685 751 Q700 590 760 510 L865 440 L1125 428 L1274 500 Q1334 530 1334 550 V751Z" fill="#56585d"/><path d="M865 440 L800 560 L880 640 L930 500Z" fill="#64666b"/><path d="M1125 428 L1200 560 L1100 610 L1060 500Z" fill="#494b50"/><path d="M930 500 L1068 500 L1012 622 L975 751 L905 751 L925 622Z" fill="#1b1c20"/><ellipse cx="1005" cy="250" rx="124" ry="185" fill="#c39378"/><path d="M878 250 Q872 28 1005 28 Q1138 28 1132 250 Q1116 96 1005 84 Q894 96 878 250Z" fill="#4b3d36"/><path d="M880 285 Q884 480 1005 508 Q1126 480 1130 285 Q1104 322 1005 306 Q906 322 880 285Z" fill="#4a413b"/><ellipse cx="1003" cy="352" rx="58" ry="24" fill="#efe7da"/><path d="M935 338 Q1003 296 1071 338 Q1003 322 935 338Z" fill="#4a413b"/><ellipse cx="950" cy="212" rx="22" ry="8" fill="#6b4a3c"/><ellipse cx="1058" cy="212" rx="22" ry="8" fill="#6b4a3c"/><ellipse cx="1003" cy="280" rx="28" ry="14" fill="#b98367"/></g></g></svg>
<span class="t " style="left:77.41px;top:87.06px;font-size:68.00px;color:#333;letter-spacing:-1.342px;">Three things I</span>
<span class="t " style="left:77.41px;top:173.08px;font-size:68.00px;color:#333;letter-spacing:-0.809px;">promise…</span>
<svg class="b" style="left:0;top:0" width="1334" height="750.5" viewBox="0 0 1334 750.5"><path d="M67.9 286.7 Q161.2 280.7 261.2 287.7 T454.4 285.7" fill="none" stroke="#dd7a35" stroke-width="15" stroke-linecap="round"/><path d="M127.9 288.7 Q261.2 281.7 394.4 288.7" fill="none" stroke="#e9a566" stroke-width="4"/></svg>
<span class="t " style="left:92.26px;top:329.21px;font-size:22.00px;color:#333;letter-spacing:2.057px;font-family:'Liberation Serif',serif;font-weight:700;">This will be entertaining</span>
<div class="b" style="left:68.57px;top:338.84px;width:6.00px;height:6.00px;background:#333;border-radius:50%;"></div>
<span class="t " style="left:92.26px;top:373.47px;font-size:22.00px;color:#333;letter-spacing:2.153px;font-family:'Liberation Serif',serif;font-weight:700;">It will be chaos. (50/50 chance of</span>
<div class="b" style="left:68.57px;top:383.10px;width:6.00px;height:6.00px;background:#333;border-radius:50%;"></div>
<span class="t " style="left:92.26px;top:399.65px;font-size:22.00px;color:#333;letter-spacing:2.122px;font-family:'Liberation Serif',serif;font-weight:700;">good or bad chaos)</span>
<span class="t " style="left:92.26px;top:441.42px;font-size:22.00px;color:#333;letter-spacing:2.009px;font-family:'Liberation Serif',serif;font-weight:700;">I will say words. You might like them.</span>
<div class="b" style="left:68.57px;top:451.04px;width:6.00px;height:6.00px;background:#333;border-radius:50%;"></div>
<span class="t " style="left:92.26px;top:485.06px;font-size:22.00px;color:#333;letter-spacing:2.073px;font-family:'Liberation Serif',serif;font-weight:700;">If this sounds like nonsense to you, I</span>
<div class="b" style="left:68.57px;top:494.68px;width:6.00px;height:6.00px;background:#333;border-radius:50%;"></div>
<span class="t " style="left:92.26px;top:518.09px;font-size:22.00px;color:#333;letter-spacing:2.301px;font-family:'Liberation Serif',serif;font-weight:700;">promise you’re in good company.</span>
<span class="t " style="left:67.95px;top:603.89px;font-size:23.00px;color:#222;letter-spacing:2.163px;"><b>theauthorstack.com/hapitalist</b></span></div></div>
<div class="b" style="left:36.00px;top:626.80px;width:214.00px;height:120.40px;background:#ebebeb;overflow:hidden;border-radius:2.5px;box-shadow:0 1px 2.5px rgba(0,0,0,.35);"><div class="b" style="left:0;top:0;width:1334px;height:750.5px;transform:scale(0.16042);transform-origin:0 0;"><span class="t " style="left:77.41px;top:85.19px;font-size:68.00px;color:#333;letter-spacing:-0.753px;">What is a</span>
<span class="t " style="left:77.41px;top:172.77px;font-size:68.00px;color:#333;letter-spacing:0.884px;">Hapitalist?</span>
<svg class="b" style="left:0;top:0" width="1334" height="750.5" viewBox="0 0 1334 750.5"><path d="M67.9 288.6 Q161.2 282.6 261.2 289.6 T454.4 287.6" fill="none" stroke="#dd7a35" stroke-width="15" stroke-linecap="round"/><path d="M127.9 290.6 Q261.2 283.6 394.4 290.6" fill="none" stroke="#e9a566" stroke-width="4"/></svg>
<span class="t " style="left:106.60px;top:327.92px;font-size:25.00px;color:#444;letter-spacing:2.202px;">A <b>Hapitalist</b> is someone who</span>
<div class="b" style="left:82.91px;top:339.08px;width:6.00px;height:6.00px;background:#444;border-radius:50%;"></div>
<span class="t " style="left:106.60px;top:359.09px;font-size:25.00px;color:#444;letter-spacing:2.017px;">strives to align personal</span>
<span class="t " style="left:106.60px;top:395.24px;font-size:25.00px;color:#444;letter-spacing:2.192px;">happiness, social well-being,</span>
<span class="t " style="left:106.60px;top:425.17px;font-size:25.00px;color:#444;letter-spacing:2.107px;">and financial stability.</span>
<span class="t " style="left:106.60px;top:470.05px;font-size:25.00px;color:#444;letter-spacing:2.039px;">They see happiness and health</span>
<div class="b" style="left:82.91px;top:481.21px;width:6.00px;height:6.00px;background:#444;border-radius:50%;"></div>
<span class="t " style="left:106.60px;top:506.20px;font-size:25.00px;color:#444;letter-spacing:2.472px;">as valuable “capital” worth</span>
<span class="t " style="left:106.60px;top:539.24px;font-size:25.00px;color:#444;letter-spacing:1.813px;">investing in on par with, <b>or even</b></span>
<span class="t " style="left:106.60px;top:571.66px;font-size:25.00px;color:#444;letter-spacing:2.631px;"><b>more important</b></span>
<span class="t " style="left:106.60px;top:601.58px;font-size:25.00px;color:#444;letter-spacing:2.198px;"><b>than,</b> traditional indicators of</span>
<span class="t " style="left:106.60px;top:638.36px;font-size:25.00px;color:#444;letter-spacing:2.278px;">wealth.</span>
<svg class="b" style="left:0;top:0" width="1334" height="750.5" viewBox="0 0 1334 750.5"><path d="M689.8 443.8 A246.2 246.2 0 0 1 1154.7 281.8" fill="none" stroke="#e88fcb" stroke-width="25"/><path d="M709.3 443.8 A228.2 228.2 0 0 1 1135.6 281.8" fill="none" stroke="#f5d5df" stroke-width="13"/><path d="M726.3 443.8 A212.6 212.6 0 0 1 1119.1 281.8" fill="none" stroke="#a4c6e9" stroke-width="19"/><circle cx="920.1" cy="356.6" r="197.0" fill="#f3d48d" stroke="#c2578f" stroke-width="4"/><ellipse cx="997.4" cy="437.6" rx="106.0" ry="93.5" fill="#f7ecd8" stroke="#c2578f" stroke-width="5"/><ellipse cx="872.7" cy="356.6" rx="87.3" ry="81.0" fill="#f7d9a2" stroke="#c2578f" stroke-width="5"/><ellipse cx="972.4" cy="344.1" rx="56.1" ry="49.9" fill="#f7ecd8" stroke="#c2578f" stroke-width="5"/><ellipse cx="984.9" cy="581.0" rx="211.9" ry="93.5" fill="#f0b95c" stroke="#c2578f" stroke-width="5"/><ellipse cx="872.7" cy="618.4" rx="130.9" ry="68.6" fill="#f7d9a2" stroke="#c2578f" stroke-width="5"/><ellipse cx="760.5" cy="506.2" rx="43.6" ry="87.3" fill="#f7ecd8" stroke="#c2578f" stroke-width="5"/><ellipse cx="1147.0" cy="394.0" rx="37.4" ry="93.5" fill="#f7ecd8" stroke="#c2578f" stroke-width="5" transform="rotate(25 1147.0 394.0)"/><ellipse cx="685.7" cy="487.5" rx="62.3" ry="43.6" fill="#f8f4f4" stroke="#c2578f" stroke-width="5"/><ellipse cx="1171.9" cy="312.9" rx="74.8" ry="46.8" fill="#f8f4f4" stroke="#c2578f" stroke-width="5"/></svg></div></div>
<div class="b" style="left:36.00px;top:769.80px;width:214.00px;height:120.40px;background:#ebebeb;overflow:hidden;border-radius:2.5px;box-shadow:0 1px 2.5px rgba(0,0,0,.35);"><div class="b" style="left:0;top:0;width:1334px;height:750.5px;transform:scale(0.16042);transform-origin:0 0;"><svg class="b" style="left:0;top:0" width="1334" height="750.5" viewBox="0 0 1334 750.5"><circle cx="13" cy="375.25" r="443" fill="#d6733b"/><path d="M1270.06 508.94 A222.00 222.00 0 0 1 1263.62 549.83" fill="none" stroke="#2b9bd1" stroke-width="12.5" stroke-linecap="round"/><path d="M1242.85 602.29 A222.00 222.00 0 0 1 1219.55 636.51" fill="none" stroke="#2b9bd1" stroke-width="12.5" stroke-linecap="round"/><path d="M1178.36 675.06 A222.00 222.00 0 0 1 1142.67 696.04" fill="none" stroke="#2b9bd1" stroke-width="12.5" stroke-linecap="round"/><path d="M1088.96 713.28 A222.00 222.00 0 0 1 1047.73 717.00" fill="none" stroke="#2b9bd1" stroke-width="12.5" stroke-linecap="round"/></svg>
<span class="t " style="left:81.15px;top:304.81px;font-size:59.30px;color:#f3ece5;transform:scaleX(0.9398);">What you’re</span>
<span class="t " style="left:81.15px;top:369.95px;font-size:59.30px;color:#f3ece5;transform:scaleX(0.9244);">getting wrong</span>
<span class="t " style="left:520.38px;top:112.28px;font-size:36.00px;color:#333;letter-spacing:0.445px;">What we really mean when we say “why is</span>
<div class="b" style="left:497.38px;top:125.83px;width:9.36px;height:9.36px;background:#333;border-radius:50%;"></div>
<span class="t " style="left:520.38px;top:157.16px;font-size:36.00px;color:#333;letter-spacing:0.839px;">this so hard?” isn’t “why can’t this be</span>
<span class="t " style="left:520.38px;top:193.94px;font-size:36.00px;color:#333;letter-spacing:0.830px;">easy?”</span>
<span class="t " style="left:520.38px;top:248.79px;font-size:36.00px;color:#333;letter-spacing:0.275px;">Easy is a measure of <b>difficulty.</b> If we</span>
<div class="b" style="left:497.38px;top:262.35px;width:9.36px;height:9.36px;background:#333;border-radius:50%;"></div>
<span class="t " style="left:520.38px;top:293.36px;font-size:36.00px;color:#333;letter-spacing:0.863px;">wanted something easy, we wouldn’t</span>
<span class="t " style="left:520.38px;top:336.06px;font-size:36.00px;color:#333;letter-spacing:0.882px;">become authors.</span>
<span class="t " style="left:520.38px;top:392.79px;font-size:36.00px;color:#333;letter-spacing:0.553px;">What we <b>actually</b> mean is “why is there so</span>
<div class="b" style="left:497.38px;top:406.34px;width:9.36px;height:9.36px;background:#333;border-radius:50%;"></div>
<span class="t " style="left:520.38px;top:436.43px;font-size:36.00px;color:#333;letter-spacing:1.482px;">much friction?”</span>
<span class="t " style="left:496.69px;top:541.77px;font-size:36.00px;color:#333;letter-spacing:0.389px;"><b>Easy measures difficulty, but ease</b></span>
<span class="t " style="left:496.69px;top:585.41px;font-size:36.00px;color:#333;letter-spacing:0.532px;"><b>measures friction.</b></span></div></div>
<div class="b" style="left:36.00px;top:912.60px;width:214.00px;height:97.40px;background:#ebebeb;overflow:hidden;border-radius:2.5px 2.5px 0 0;box-shadow:0 1px 2.5px rgba(0,0,0,.35);"><div class="b" style="left:0;top:0;width:1334px;height:750.5px;transform:scale(0.16042);transform-origin:0 0;"><svg class="b" style="left:0;top:0" width="1334" height="750.5" viewBox="0 0 1334 750.5"><circle cx="13" cy="375.25" r="443" fill="#d6733b"/><path d="M1270.06 508.94 A222.00 222.00 0 0 1 1263.62 549.83" fill="none" stroke="#2b9bd1" stroke-width="12.5" stroke-linecap="round"/><path d="M1242.85 602.29 A222.00 222.00 0 0 1 1219.55 636.51" fill="none" stroke="#2b9bd1" stroke-width="12.5" stroke-linecap="round"/><path d="M1178.36 675.06 A222.00 222.00 0 0 1 1142.67 696.04" fill="none" stroke="#2b9bd1" stroke-width="12.5" stroke-linecap="round"/><path d="M1088.96 713.28 A222.00 222.00 0 0 1 1047.73 717.00" fill="none" stroke="#2b9bd1" stroke-width="12.5" stroke-linecap="round"/></svg>
<span class="t " style="left:81.15px;top:343.77px;font-size:59.30px;color:#f3ece5;transform:scaleX(0.9328);">Easeful work</span>
<span class="t " style="left:520.38px;top:62.90px;font-size:31.00px;color:#333;letter-spacing:1.710px;">Easeful work removes unnecessary struggle,</span>
<div class="b" style="left:497.38px;top:74.57px;width:8.06px;height:8.06px;background:#333;border-radius:50%;"></div>
<span class="t " style="left:520.38px;top:99.68px;font-size:31.00px;color:#333;letter-spacing:1.712px;">aligns with your natural strengths, and</span>
<span class="t " style="left:520.38px;top:136.77px;font-size:31.00px;color:#333;letter-spacing:1.977px;">exponentially amplifies your effort.</span>
<span class="t " style="left:520.38px;top:193.18px;font-size:31.00px;color:#333;letter-spacing:1.584px;">It’s still work, but it’s the <b>right</b> work, moving</span>
<div class="b" style="left:497.38px;top:204.85px;width:8.06px;height:8.06px;background:#333;border-radius:50%;"></div>
<span class="t " style="left:520.38px;top:230.27px;font-size:31.00px;color:#333;letter-spacing:1.832px;">you forward instead of spinning your wheels</span>
<span class="t " style="left:520.38px;top:267.36px;font-size:31.00px;color:#333;letter-spacing:1.774px;">in place.</span>
<span class="t " style="left:520.38px;top:323.78px;font-size:31.00px;color:#333;letter-spacing:2.052px;">Most “this is hard” moments are actually</span>
<div class="b" style="left:497.38px;top:335.45px;width:8.06px;height:8.06px;background:#333;border-radius:50%;"></div>
<span class="t " style="left:520.38px;top:360.87px;font-size:31.00px;color:#333;letter-spacing:2.150px;">“why am I stuck?” moments.</span>
<span class="t " style="left:520.38px;top:411.36px;font-size:31.00px;color:#333;letter-spacing:1.688px;">The <b>difficulty</b> isn’t the problem. The friction</span>
<div class="b" style="left:497.38px;top:423.03px;width:8.06px;height:8.06px;background:#333;border-radius:50%;"></div>
<span class="t " style="left:520.38px;top:452.50px;font-size:31.00px;color:#333;letter-spacing:0.707px;">is.</span>
<span class="t " style="left:496.69px;top:554.73px;font-size:31.00px;color:#333;letter-spacing:1.465px;"><b>When you’re stuck, more effort just digs the</b></span>
<span class="t " style="left:496.69px;top:592.14px;font-size:31.00px;color:#333;letter-spacing:1.726px;"><b>ditch deeper.</b></span></div></div>
<span class="t " style="left:12.50px;top:194.46px;font-size:14.70px;color:#595959;">1</span>
<span class="t " style="left:12.50px;top:480.16px;font-size:14.70px;color:#595959;">3</span>
<span class="t " style="left:12.50px;top:623.16px;font-size:14.70px;color:#595959;">4</span>
<span class="t " style="left:12.50px;top:766.16px;font-size:14.70px;color:#595959;">5</span>
<span class="t " style="left:12.50px;top:909.16px;font-size:14.70px;color:#595959;">6</span>
<span class="t " style="left:12.50px;top:337.36px;font-size:14.70px;color:#c2522d;">2</span>
<svg class="b" style="left:177.00px;top:243.00px;" width="14" height="21" viewBox="0 0 14 21"><path d="M1 1 V16.2 L4.6 12.8 L7.3 19 L9.6 18 L7 12 H11.8Z" fill="#fff" stroke="#111" stroke-width="1" stroke-linejoin="miter"/></svg>
<!-- sec_slide -->
<div class="b" style="left:431.00px;top:192.50px;width:1335.50px;height:752.50px;background:#c4c4c4;border-top:1px solid #dfdad6;border-left:1px solid #dfdad6;"></div>
<div class="b" style="left:432.00px;top:193.50px;width:1333.50px;height:750.50px;background:#ebebeb;overflow:hidden;"><svg class="b" style="left:0;top:0" width="1334" height="750.5" viewBox="0 0 1334 750.5"><circle cx="13.0" cy="375.2" r="443" fill="#d6733b"/><path d="M1270.06 508.94 A222.00 222.00 0 0 1 1263.62 549.83" fill="none" stroke="#2b9bd1" stroke-width="13" stroke-linecap="round"/><path d="M1242.85 602.29 A222.00 222.00 0 0 1 1219.55 636.51" fill="none" stroke="#2b9bd1" stroke-width="13" stroke-linecap="round"/><path d="M1178.36 675.06 A222.00 222.00 0 0 1 1142.67 696.04" fill="none" stroke="#2b9bd1" stroke-width="13" stroke-linecap="round"/><path d="M1088.96 713.28 A222.00 222.00 0 0 1 1047.73 717.00" fill="none" stroke="#2b9bd1" stroke-width="13" stroke-linecap="round"/></svg>
<span class="t " style="left:83.70px;top:304.50px;font-size:59.30px;color:#f3ece5;transform:scaleX(0.9164);-webkit-text-stroke:0.55px #f3ece5;">The story so</span>
<span class="t " style="left:83.70px;top:370.50px;font-size:59.30px;color:#f3ece5;transform:scaleX(0.8832);-webkit-text-stroke:0.55px #f3ece5;">far…</span>
<span class="t " style="left:519.70px;top:90.98px;font-size:37.00px;color:#161616;letter-spacing:0.179px;-webkit-text-stroke:0.25px #161616;">I’ve sent like 30+ emails trying to explain</span>
<div class="b" style="left:498.00px;top:104.70px;width:9.60px;height:9.60px;background:#161616;border-radius:50%;"></div>
<span class="t " style="left:519.70px;top:132.98px;font-size:37.00px;color:#161616;letter-spacing:1.403px;-webkit-text-stroke:0.25px #161616;">Hapitalist</span>
<span class="t " style="left:519.70px;top:188.48px;font-size:37.00px;color:#161616;letter-spacing:0.356px;-webkit-text-stroke:0.25px #161616;">Built a conference, a membership, and an</span>
<div class="b" style="left:498.00px;top:202.20px;width:9.60px;height:9.60px;background:#161616;border-radius:50%;"></div>
<span class="t " style="left:521.70px;top:230.48px;font-size:37.00px;color:#161616;letter-spacing:0.465px;-webkit-text-stroke:0.25px #161616;">archetyping system that prototyped these</span>
<span class="t " style="left:520.70px;top:272.48px;font-size:37.00px;color:#161616;letter-spacing:0.375px;-webkit-text-stroke:0.25px #161616;">ideas (<i>and burnt that company to the</i></span>
<span class="t " style="left:521.70px;top:314.48px;font-size:37.00px;color:#161616;letter-spacing:0.377px;-webkit-text-stroke:0.25px #161616;"><i>ground</i>)</span>
<span class="t " style="left:522.70px;top:369.98px;font-size:37.00px;color:#161616;letter-spacing:0.443px;-webkit-text-stroke:0.25px #161616;">Written a 90k book about the principles</span>
<div class="b" style="left:498.00px;top:383.70px;width:9.60px;height:9.60px;background:#161616;border-radius:50%;"></div>
<span class="t " style="left:520.70px;top:411.98px;font-size:37.00px;color:#161616;letter-spacing:1.070px;-webkit-text-stroke:0.25px #161616;">behind it.</span>
<span class="t " style="left:519.70px;top:467.68px;font-size:37.00px;color:#161616;letter-spacing:0.312px;-webkit-text-stroke:0.25px #161616;">Now, I’m gonna sum all this up in “a short</span>
<div class="b" style="left:498.00px;top:481.40px;width:9.60px;height:9.60px;background:#161616;border-radius:50%;"></div>
<span class="t " style="left:522.70px;top:509.68px;font-size:37.00px;color:#161616;letter-spacing:0.401px;-webkit-text-stroke:0.25px #161616;">time” and then do a breakthrough</span>
<span class="t " style="left:521.70px;top:551.68px;font-size:37.00px;color:#161616;letter-spacing:0.478px;-webkit-text-stroke:0.25px #161616;">session…</span>
<span class="t " style="left:517.70px;top:607.98px;font-size:37.00px;color:#161616;letter-spacing:0.246px;-webkit-text-stroke:0.25px #161616;">…all in an hour.</span>
<div class="b" style="left:498.00px;top:621.70px;width:9.60px;height:9.60px;background:#161616;border-radius:50%;"></div>
<svg class="b" style="left:522.00px;top:166.70px;" width="164" height="3" viewBox="0 0 164 3"><path d="M0 1.2 l1.5 -1.2 l1.5 1.2 l1.5 -1.2 l1.5 1.2 l1.5 -1.2 l1.5 1.2 l1.5 -1.2 l1.5 1.2 l1.5 -1.2 l1.5 1.2 l1.5 -1.2 l1.5 1.2 l1.5 -1.2 l1.5 1.2 l1.5 -1.2 l1.5 1.2 l1.5 -1.2 l1.5 1.2 l1.5 -1.2 l1.5 1.2 l1.5 -1.2 l1.5 1.2 l1.5 -1.2 l1.5 1.2 l1.5 -1.2 l1.5 1.2 l1.5 -1.2 l1.5 1.2 l1.5 -1.2 l1.5 1.2 l1.5 -1.2 l1.5 1.2 l1.5 -1.2 l1.5 1.2 l1.5 -1.2 l1.5 1.2 l1.5 -1.2 l1.5 1.2 l1.5 -1.2 l1.5 1.2 l1.5 -1.2 l1.5 1.2 l1.5 -1.2 l1.5 1.2 l1.5 -1.2 l1.5 1.2 l1.5 -1.2 l1.5 1.2 l1.5 -1.2 l1.5 1.2 l1.5 -1.2 l1.5 1.2 l1.5 -1.2 l1.5 1.2 l1.5 -1.2 l1.5 1.2 l1.5 -1.2 l1.5 1.2 l1.5 -1.2 l1.5 1.2 l1.5 -1.2 l1.5 1.2 l1.5 -1.2 l1.5 1.2 l1.5 -1.2 l1.5 1.2 l1.5 -1.2 l1.5 1.2 l1.5 -1.2 l1.5 1.2 l1.5 -1.2 l1.5 1.2 l1.5 -1.2 l1.5 1.2 l1.5 -1.2 l1.5 1.2 l1.5 -1.2 l1.5 1.2 l1.5 -1.2 l1.5 1.2 l1.5 -1.2 l1.5 1.2 l1.5 -1.2 l1.5 1.2 l1.5 -1.2 l1.5 1.2 l1.5 -1.2 l1.5 1.2 l1.5 -1.2 l1.5 1.2 l1.5 -1.2 l1.5 1.2 l1.5 -1.2 l1.5 1.2 l1.5 -1.2 l1.5 1.2 l1.5 -1.2 l1.5 1.2 l1.5 -1.2 l1.5 1.2 l1.5 -1.2 l1.5 1.2 l1.5 -1.2 l1.5 1.2 l1.5 -1.2 l1.5 1.2 l1.5 -1.2 l1.5 1.2" fill="none" stroke="#e2564f" stroke-width="0.9"/></svg></div>
<div class="b" style="left:290.00px;top:963.00px;width:1624.00px;height:1.00px;background:#c4c4c4;"></div>
<span class="t " style="left:302.50px;top:972.64px;font-size:14.60px;color:#5e5e5e;letter-spacing:0.026px;">Click to add notes</span>
<!-- sec_status -->
<div class="b" style="left:0.00px;top:1010.00px;width:1920.00px;height:22.00px;background:#e4e4e4;"></div>
<span class="t " style="left:12.50px;top:1014.84px;font-size:12.00px;color:#2e2e2e;letter-spacing:-0.393px;">Slide 2 of 24</span>
<span class="t " style="left:107.50px;top:1015.34px;font-size:12.00px;color:#2e2e2e;letter-spacing:-0.351px;">English (United States)</span>
<svg class="b" style="left:240.00px;top:1013.50px;" width="16" height="16" viewBox="0 0 16 16"><circle cx="6.5" cy="2.6" r="1.7" fill="none" stroke="#333" stroke-width="1"/><path d="M1 5.2 Q3.5 6.6 6.5 6.6 Q9.5 6.6 12 5.2 M4.8 6.5 V9.5 L3 13.8 M8.2 6.5 V8.5" fill="none" stroke="#333" stroke-width="1.1" stroke-linecap="round"/><path d="M7 11.8 L9.3 14 L14 9.2" fill="none" stroke="#333" stroke-width="1.2"/></svg>
<span class="t " style="left:258.75px;top:1014.84px;font-size:12.00px;color:#2e2e2e;letter-spacing:-0.237px;">Accessibility: Good to go</span>
<svg class="b" style="left:1489.00px;top:1012.50px;" width="17" height="16" viewBox="0 0 17 16"><path d="M0.5 8 H16 M0.5 11.5 H16 M0.5 15 H16" stroke="#333" stroke-width="1"/><path d="M5.5 4.5 L8.2 1.8 L11 4.5" fill="none" stroke="#333" stroke-width="1.1"/></svg>
<span class="t " style="left:1507.50px;top:1016.14px;font-size:12.00px;color:#2e2e2e;letter-spacing:-0.587px;">Notes</span>
<div class="b" style="left:1556.00px;top:1010.00px;width:40.00px;height:22.00px;background:#c9c9c9;"></div>
<svg class="b" style="left:1568.00px;top:1014.00px;" width="16" height="14" viewBox="0 0 16 14"><rect x="1" y="1" width="14" height="11" fill="none" stroke="#333" stroke-width="1.1"/><path d="M4.5 1 V12 M1 9 H15" stroke="#333" stroke-width="1"/><rect x="6.5" y="3" width="6.5" height="4" fill="none" stroke="#333" stroke-width="1"/></svg>
<svg class="b" style="left:1608.00px;top:1014.00px;" width="16" height="14" viewBox="0 0 16 14"><rect x="1.5" y="1.5" width="5" height="4" fill="none" stroke="#333" stroke-width="1.1"/><rect x="9.5" y="1.5" width="5" height="4" fill="none" stroke="#333" stroke-width="1.1"/><rect x="1.5" y="8.5" width="5" height="4" fill="none" stroke="#333" stroke-width="1.1"/><rect x="9.5" y="8.5" width="5" height="4" fill="none" stroke="#333" stroke-width="1.1"/></svg>
<svg class="b" style="left:1648.00px;top:1014.00px;" width="16" height="14" viewBox="0 0 16 14"><path d="M8 2.5 V12.5 M8 2.5 Q5 1 1.5 1.5 V11.5 Q5 11 8 12.5 Q11 11 14.5 11.5 V1.5 Q11 1 8 2.5" fill="none" stroke="#333" stroke-width="1.1" stroke-linejoin="round"/><path d="M3.5 4 H6 M3.5 6.5 H6 M10 4 H12.5 M10 6.5 H12.5" stroke="#333" stroke-width="0.8"/></svg>
<svg class="b" style="left:1687.00px;top:1013.50px;" width="16" height="15" viewBox="0 0 16 15"><path d="M1 1.5 H15 M2.5 1.5 V8.5 H13.5 V1.5 M8 8.5 V11.5 M5 14 L8 11.5 L11 14" fill="none" stroke="#333" stroke-width="1.1"/></svg>
<div class="b" style="left:1722.00px;top:1021.00px;width:8.00px;height:1.00px;background:#333;"></div>
<div class="b" style="left:1735.00px;top:1021.00px;width:100.00px;height:1.00px;background:#666;"></div>
<div class="b" style="left:1784.00px;top:1015.80px;width:5.00px;height:11.00px;background:#6e6e6e;"></div>
<div class="b" style="left:1840.00px;top:1021.00px;width:8.00px;height:1.00px;background:#333;"></div>
<div class="b" style="left:1843.50px;top:1017.50px;width:1.00px;height:8.00px;background:#333;"></div>
<span class="t " style="left:1861.20px;top:1015.93px;font-size:11.30px;color:#2e2e2e;letter-spacing:-0.301px;">105%</span>
<svg class="b" style="left:1899.80px;top:1013.50px;" width="15.5" height="15.5" viewBox="0 0 17 17"><rect x="4.5" y="4.5" width="8" height="8" rx="1.5" fill="none" stroke="#333" stroke-width="1.1"/><path d="M6.5 2.8 L8.5 0.9 L10.5 2.8 M6.5 14.2 L8.5 16.1 L10.5 14.2 M2.8 6.5 L0.9 8.5 L2.8 10.5 M14.2 6.5 L16.1 8.5 L14.2 10.5" fill="none" stroke="#333" stroke-width="1.1"/></svg>
<div class="b" style="left:1903.00px;top:178.50px;width:18.00px;height:730.00px;background:#e2e2e2;border-radius:8.5px;"></div>
<svg class="b" style="left:1905.70px;top:182.00px;" width="12" height="9" viewBox="0 0 12 9"><path d="M1.3 7.3 L5.8 1.6 L10.3 7.3Z" fill="#747474" stroke="#747474" stroke-width="1" stroke-linejoin="round"/></svg>
<div class="b" style="left:1907.00px;top:224.00px;width:9.00px;height:29.00px;background:#747474;border-radius:4.5px;"></div>
<svg class="b" style="left:1905.70px;top:895.50px;" width="12" height="9" viewBox="0 0 12 9"><path d="M1.3 1.8 L5.8 7.5 L10.3 1.8Z" fill="#747474" stroke="#747474" stroke-width="1" stroke-linejoin="round"/></svg>
<svg class="b" style="left:1905.50px;top:910.50px;" width="12" height="12" viewBox="0 0 12 12"><path d="M1 6 L6 0.6 L11 6Z M1 11.6 L6 6.2 L11 11.6Z" fill="#747474" stroke="#747474" stroke-width="0.8" stroke-linejoin="round"/></svg>
<svg class="b" style="left:1905.50px;top:927.50px;" width="12" height="12" viewBox="0 0 12 12"><path d="M1 0.6 L6 6 L11 0.6Z M1 6.2 L6 11.6 L11 6.2Z" fill="#747474" stroke="#747474" stroke-width="0.8" stroke-linejoin="round"/></svg>
<!-- sec_taskbar -->
<div class="b" style="left:0.00px;top:1032.00px;width:1920.00px;height:48.00px;background:#272727;"></div>
<div class="b" style="left:0.00px;top:1078.00px;width:1920.00px;height:2.00px;background:#17321c;"></div>
<svg class="b" style="left:18.00px;top:1040.00px;" width="32" height="30" viewBox="0 0 32 30"><circle cx="12" cy="15.5" r="9.5" fill="#f0a12c"/><path d="M9 19 Q9 15.5 12.5 16 Q14 12.5 17.5 14 Q21 14 21 17 Q24 17.5 23.5 20 Q23 22 21 22 H11 Q9 22 9 19Z" fill="#cfd7e6"/><circle cx="20" cy="6.5" r="7.8" fill="#ea8f9b"/></svg>
<span class="t " style="left:34.60px;top:1040.77px;font-size:11.50px;color:#3a1a1f;">3</span>
<span class="t " style="left:50.75px;top:1041.84px;font-size:12.00px;color:#fafafa;letter-spacing:-0.659px;">57°F</span>
<span class="t " style="left:50.75px;top:1057.34px;font-size:12.00px;color:#c9c9c9;letter-spacing:0.061px;">Mostly sunny</span>
<svg class="b" style="left:463.00px;top:1045.00px;" width="24" height="23.2" viewBox="0 0 24 23.2"><defs><linearGradient id="wing" x1="0" y1="0" x2="1" y2="1"><stop offset="0" stop-color="#5fd0fb"/><stop offset="1" stop-color="#1f8fe6"/></linearGradient></defs><rect x="0" y="0" width="11.2" height="11" rx="0.8" fill="url(#wing)"/><rect x="12.3" y="0" width="11.2" height="11" rx="0.8" fill="url(#wing)"/><rect x="0" y="12.1" width="11.2" height="11" rx="0.8" fill="url(#wing)"/><rect x="12.3" y="12.1" width="11.2" height="11" rx="0.8" fill="url(#wing)"/></svg>
<div class="b" style="left:499.30px;top:1040.00px;width:219.50px;height:32.00px;background:#3d3d3d;border-radius:16px;border:1px solid #4d4d4d;"></div>
<svg class="b" style="left:510.00px;top:1047.00px;" width="18" height="18" viewBox="0 0 18 18"><circle cx="7.2" cy="7.2" r="5.6" fill="none" stroke="#e6e6e6" stroke-width="1.6"/><path d="M11.3 11.3 L16 16" stroke="#e6e6e6" stroke-width="1.8" stroke-linecap="round"/></svg>
<span class="t " style="left:536.00px;top:1048.85px;font-size:14.00px;color:#dadada;letter-spacing:-0.672px;">Search</span>
<svg class="b" style="left:668.00px;top:1041.00px;" width="46" height="30" viewBox="0 0 46 30"><ellipse cx="23" cy="20" rx="21" ry="7.5" fill="#d9d4c8"/><path d="M4 16 L10 6 L15 14 L19 3 L25 13 L31 4 L34 14 L40 8 L42 18 Q23 26 4 16Z" fill="#f0c24a"/><path d="M8 17 Q23 8 38 17 Q23 24 8 17Z" fill="#c98a2d"/><ellipse cx="16" cy="11" rx="5" ry="3.5" fill="#f4f1ea"/><ellipse cx="24" cy="10" rx="4" ry="5" fill="#9bbf3c"/><circle cx="31" cy="11" r="3.3" fill="#d8402c"/><circle cx="37" cy="14" r="2" fill="#4f9a33"/></svg>
<svg class="b" style="left:730.00px;top:1044.00px;" width="26" height="24" viewBox="0 0 26 24"><rect x="7" y="1" width="17.5" height="15.5" rx="1.5" fill="#e1e1e1"/><rect x="1" y="7" width="17.5" height="15.5" rx="1.5" fill="#8b8b8b" stroke="#4d4d4d" stroke-width="0.6"/></svg>
<svg class="b" style="left:774.00px;top:1043.00px;" width="26" height="26" viewBox="0 0 26 26"><defs><linearGradient id="tm" x1="0" y1="0" x2="1" y2="1"><stop offset="0" stop-color="#9f8cf0"/><stop offset="1" stop-color="#5a49c8"/></linearGradient></defs><path d="M13 1.5 A11.5 11.5 0 1 1 5.5 21.8 L1.5 24 L2.8 18.5 A11.5 11.5 0 0 1 13 1.5Z" fill="url(#tm)"/><rect x="6.5" y="8.8" width="9" height="8" rx="1.6" fill="#f3f1ff"/><path d="M16.2 12 L20 9.2 V16.5 L16.2 13.8Z" fill="#f3f1ff"/></svg>
<svg class="b" style="left:818.00px;top:1044.00px;" width="26" height="24" viewBox="0 0 26 24"><path d="M1 3 Q1 1.5 2.5 1.5 H9 L11.5 4 H23 Q24.5 4 24.5 5.5 V8 H1Z" fill="#e8a92c"/><rect x="1" y="5.5" width="23.5" height="16.5" rx="1.5" fill="#f7cd4d"/><rect x="6.5" y="15" width="12.5" height="7" rx="1" fill="#2f7fd6"/></svg>
<svg class="b" style="left:862.00px;top:1044.00px;" width="24" height="24" viewBox="0 0 24 24"><rect x="5" y="1" width="17.5" height="22" rx="2.5" fill="#3c8be0"/><rect x="5" y="1" width="17.5" height="7.5" rx="2.5" fill="#62b1f3"/><rect x="5" y="15.5" width="17.5" height="7.5" rx="2.5" fill="#1c57b5"/><rect x="0.5" y="9.5" width="11.5" height="11.5" rx="1.8" fill="#1d4fa8"/></svg><span class="t " style="left:864.20px;top:1056.80px;font-size:8.50px;color:#fff;font-weight:700;">W</span>
<svg class="b" style="left:907.00px;top:1044.00px;" width="25" height="24" viewBox="0 0 25 24"><rect width="25" height="24" fill="#d873e4"/><path d="M12.5 2 L23 22 H2Z M7 12 L18 12 M12.5 2 L9 22 M17.5 12 L6 22 M8 12 L20 22" fill="none" stroke="#5d2a7a" stroke-width="0.9"/></svg>
<svg class="b" style="left:951.00px;top:1044.00px;" width="25" height="24" viewBox="0 0 25 24"><rect width="25" height="24" fill="#46aeeb"/><path d="M14 2 L2 22 H23 V2Z M14 2 V22 M8 12 L23 12 M8 12 L14 22" fill="none" stroke="#1a4f86" stroke-width="0.9"/></svg>
<svg class="b" style="left:995.00px;top:1044.00px;" width="25" height="24" viewBox="0 0 25 24"><defs><linearGradient id="apub" x1="0" y1="0" x2="1" y2="1"><stop offset="0" stop-color="#d9474a"/><stop offset="1" stop-color="#f3a25a"/></linearGradient></defs><rect width="25" height="24" fill="url(#apub)"/><path d="M2 8 L12 24 M6 4 L19 24 M11 2 L24 22 M2 2 L2 22" fill="none" stroke="#7c2320" stroke-width="0.9"/></svg>
<svg class="b" style="left:1038.50px;top:1043.50px;" width="25" height="25" viewBox="0 0 25 25"><circle cx="12.5" cy="12.5" r="12" fill="#e94235"/><path d="M12.5 12.5 L2.1 6.5 A12 12 0 0 0 12 24.5 L18 14Z" fill="#2fa44f"/><path d="M12.5 12.5 L18.5 15.5 L12 24.5 A12 12 0 0 0 22.9 6.5 H12.5Z" fill="#fbc116"/><circle cx="12.5" cy="12.5" r="5.6" fill="#fff"/><circle cx="12.5" cy="12.5" r="4.4" fill="#3f7fe8"/></svg>
<svg class="b" style="left:1083.00px;top:1044.00px;" width="24" height="24" viewBox="0 0 24 24"><rect x="5" y="1" width="17.5" height="22" rx="2.5" fill="#2fa35b"/><rect x="5" y="1" width="9" height="7.5" fill="#5fd08a"/><rect x="13.5" y="1" width="9" height="7.5" rx="2" fill="#8be3a8"/><rect x="5" y="15.5" width="17.5" height="7.5" rx="2.5" fill="#176b3a"/><rect x="0.5" y="9.5" width="11.5" height="11.5" rx="1.8" fill="#1b7a43"/></svg><span class="t " style="left:1086.30px;top:1056.80px;font-size:8.50px;color:#fff;font-weight:700;">X</span>
<svg class="b" style="left:1127.00px;top:1044.00px;" width="24" height="24" viewBox="0 0 24 24"><circle cx="12" cy="12" r="11.5" fill="#e8e8e8"/><circle cx="12" cy="12" r="9.6" fill="#f7f7f7"/><path d="M15.5 5.5 Q11 4 11 9 V16 Q11 20 7.5 18.5 M8 11 H14.5" fill="none" stroke="#2e9a3c" stroke-width="2.6" stroke-linecap="round"/></svg>
<svg class="b" style="left:1171.00px;top:1043.00px;" width="26" height="26" viewBox="0 0 26 26"><path d="M3.5 16 V12.5 A9.5 9.5 0 0 1 22.5 12.5 V16" fill="none" stroke="#2030d8" stroke-width="2.6"/><rect x="1" y="12.5" width="5.5" height="9.5" rx="2.5" fill="#2030d8"/><rect x="19.5" y="12.5" width="5.5" height="9.5" rx="2.5" fill="#2030d8"/><ellipse cx="13" cy="15" rx="6.2" ry="6.5" fill="#f0a020"/><ellipse cx="13" cy="17" rx="5" ry="3.5" fill="#e23a20"/></svg>
<div class="b" style="left:1215.00px;top:1044.00px;width:24.60px;height:24.00px;background:#4a2fd3;"></div>
<span class="t " style="left:1217.00px;top:1048.76px;font-size:5.60px;color:#fff;font-weight:700;letter-spacing:-0.070px;">amazon</span>
<span class="t " style="left:1217.30px;top:1057.07px;font-size:7.60px;color:#fff;letter-spacing:0.038px;">music</span>
<div class="b" style="left:1260.00px;top:1044.50px;width:22.50px;height:22.50px;background:#0d1b33;border-radius:4px;"></div>
<span class="t " style="left:1263.30px;top:1050.92px;font-size:12.50px;color:#31a8ff;font-weight:700;letter-spacing:0.210px;">Ps</span>
<svg class="b" style="left:1302.50px;top:1043.50px;" width="25" height="25" viewBox="0 0 25 25"><circle cx="12.5" cy="12.5" r="12" fill="#7d43e6"/><circle cx="12.5" cy="12" r="8.6" fill="#1b1c4a"/><circle cx="12.5" cy="12" r="8.6" fill="none" stroke="#c9b7ff" stroke-width="1"/><circle cx="12.5" cy="12" r="2.3" fill="#6c8cf2"/><path d="M7.5 21 Q12.5 16.5 17.5 21Z" fill="#d8ccff"/></svg>
<svg class="b" style="left:1346.00px;top:1043.00px;" width="26" height="26" viewBox="0 0 26 26"><defs><linearGradient id="cp1" x1="0" y1="0" x2="1" y2="1"><stop offset="0" stop-color="#35b6f2"/><stop offset="1" stop-color="#2a62dd"/></linearGradient><linearGradient id="cp2" x1="0" y1="0" x2="1" y2="1"><stop offset="0" stop-color="#f4c53a"/><stop offset="0.5" stop-color="#ef6a7e"/><stop offset="1" stop-color="#b864e6"/></linearGradient></defs><path d="M9 3 H16 Q19 3 20 6 L22.5 14 Q23 17 20 17 H17 L14 7 Q13.3 5 11 5 H6.5 Q7 3 9 3Z" fill="url(#cp1)"/><path d="M17 23 H10 Q7 23 6 20 L3.5 12 Q3 9 6 9 H9 L12 19 Q12.7 21 15 21 H19.5 Q19 23 17 23Z" fill="url(#cp2)"/><path d="M6.5 5 Q4 6 3.5 9.5 L3 13 Q3.5 9 7 9 H10.5 L9.5 6 Q9 5 6.5 5Z" fill="#36c26b"/></svg>
<svg class="b" style="left:1391.00px;top:1044.00px;" width="26" height="24" viewBox="0 0 26 24"><defs><linearGradient id="dsp" x1="0" y1="0" x2="1" y2="1"><stop offset="0" stop-color="#49b5e6"/><stop offset="0.5" stop-color="#e7d36a"/><stop offset="1" stop-color="#d8574a"/></linearGradient></defs><rect x="2" y="2" width="21" height="15" rx="1" fill="url(#dsp)" stroke="#cfd6de" stroke-width="1.4"/><path d="M8 21.5 H17 M12.5 17.5 V21.5" stroke="#cfd6de" stroke-width="1.6"/><path d="M0.5 3.5 V0.5 H3.5 M21.5 0.5 H24.5 V3.5 M0.5 15.5 V18.5 H3.5 M24.5 15.5 V18.5 H21.5" fill="none" stroke="#9ad06a" stroke-width="0.9"/></svg>
<div class="b" style="left:1400.00px;top:1072.50px;width:6.00px;height:2.50px;background:#8c8c8c;border-radius:1.5px;"></div>
<div class="b" style="left:1427.00px;top:1036.50px;width:39.50px;height:38.50px;background:#343434;border-radius:4px;border:1px solid #3e3e3e;"></div>
<svg class="b" style="left:1434.00px;top:1043.00px;" width="26" height="26" viewBox="0 0 26 26"><circle cx="14" cy="12.5" r="11.5" fill="#e8533a"/><path d="M14 1 A11.5 11.5 0 0 1 25.5 12.5 H14Z" fill="#f59a62"/><path d="M14 12.5 H25.5 A11.5 11.5 0 0 1 8 22.3Z" fill="#c93a2b"/><rect x="0.5" y="9.5" width="11.5" height="11.5" rx="1.8" fill="#b7282b"/></svg><span class="t " style="left:1437.70px;top:1056.80px;font-size:8.50px;color:#fff;font-weight:700;">P</span>
<div class="b" style="left:1439.50px;top:1072.80px;width:15.00px;height:3.00px;background:#4cc2ff;border-radius:1.5px;"></div>
<svg class="b" style="left:1646.00px;top:1051.00px;" width="14" height="10" viewBox="0 0 14 10"><path d="M1.5 7.8 L7 2.3 L12.5 7.8" fill="none" stroke="#f2f2f2" stroke-width="1.5"/></svg>
<svg class="b" style="left:1675.00px;top:1049.00px;" width="20" height="14" viewBox="0 0 20 14"><path d="M4.5 12.5 Q0.8 12.5 1 9.2 Q1.3 6.5 4.2 6.5 Q5.2 2 9.6 2 Q13.2 2 14.4 5.5 Q18.8 5.5 18.8 9.2 Q18.8 12.5 15.4 12.5Z" fill="#c9c9c9"/><path d="M4.2 6.5 Q7 5.5 9 7.5 L14 12.5 H4.5 Q0.8 12.5 1 9.2 Q1.3 6.5 4.2 6.5Z" fill="#9d9d9d"/></svg>
<svg class="b" style="left:1710.00px;top:1046.50px;" width="16" height="19" viewBox="0 0 16 19"><rect x="5" y="1" width="6" height="10.5" rx="3" fill="none" stroke="#7cc0f3" stroke-width="1.3"/><path d="M2.3 8.5 Q2.3 14 8 14 Q13.7 14 13.7 8.5 M8 14 V17.5" fill="none" stroke="#7cc0f3" stroke-width="1.3" stroke-linecap="round"/></svg>
<svg class="b" style="left:1739.00px;top:1047.00px;" width="20" height="17" viewBox="0 0 20 17"><path d="M1.5 6.5 Q10 -1.5 18.5 6.5" fill="none" stroke="#f2f2f2" stroke-width="1.4" stroke-linecap="round"/><path d="M4.3 9.5 Q10 4 15.7 9.5" fill="none" stroke="#f2f2f2" stroke-width="1.4" stroke-linecap="round"/><path d="M7 12.3 Q10 9.5 13 12.3" fill="none" stroke="#f2f2f2" stroke-width="1.4" stroke-linecap="round"/><circle cx="10" cy="14.7" r="1.3" fill="#f2f2f2"/></svg>
<svg class="b" style="left:1764.00px;top:1048.00px;" width="19" height="16" viewBox="0 0 19 16"><path d="M1.5 5.8 H4.5 L8.5 2 V14 L4.5 10.2 H1.5Z" fill="none" stroke="#f2f2f2" stroke-width="1.2" stroke-linejoin="round"/><path d="M11 5.5 Q12.6 8 11 10.5 M13.3 3.8 Q16 8 13.3 12.2 M15.6 2 Q19.2 8 15.6 14" fill="none" stroke="#f2f2f2" stroke-width="1.1" stroke-linecap="round"/></svg>
<svg class="b" style="left:1788.00px;top:1049.50px;" width="19" height="13" viewBox="0 0 19 13"><rect x="1" y="1.5" width="14.5" height="9.5" rx="2.3" fill="none" stroke="#f2f2f2" stroke-width="1.2"/><rect x="3" y="3.6" width="7.5" height="5.3" rx="0.8" fill="#f2f2f2"/><path d="M17 4.5 V8" stroke="#f2f2f2" stroke-width="1.4" stroke-linecap="round"/></svg>
<span class="t " style="left:1832.50px;top:1042.84px;font-size:12.00px;color:#fafafa;letter-spacing:-0.005px;">7:30 AM</span>
<span class="t " style="left:1821.50px;top:1058.84px;font-size:12.00px;color:#fafafa;letter-spacing:0.313px;">11/6/2025</span>
<svg class="b" style="left:1885.00px;top:1046.50px;" width="17" height="19" viewBox="0 0 17 19"><path d="M3 13.5 Q4.2 11.5 4.2 8 Q4.2 3.5 8.2 3.5 Q12.2 3.5 12.2 8 Q12.2 11.5 13.4 13.5Z" fill="none" stroke="#f2f2f2" stroke-width="1.2" stroke-linejoin="round"/><path d="M6.5 15.5 Q8.2 17.3 10 15.5" fill="none" stroke="#f2f2f2" stroke-width="1.2"/><path d="M11.5 1.2 H14.5 L11.5 4.6 H14.5" fill="none" stroke="#f2f2f2" stroke-width="1"/></svg>
</div>
</body></html>
